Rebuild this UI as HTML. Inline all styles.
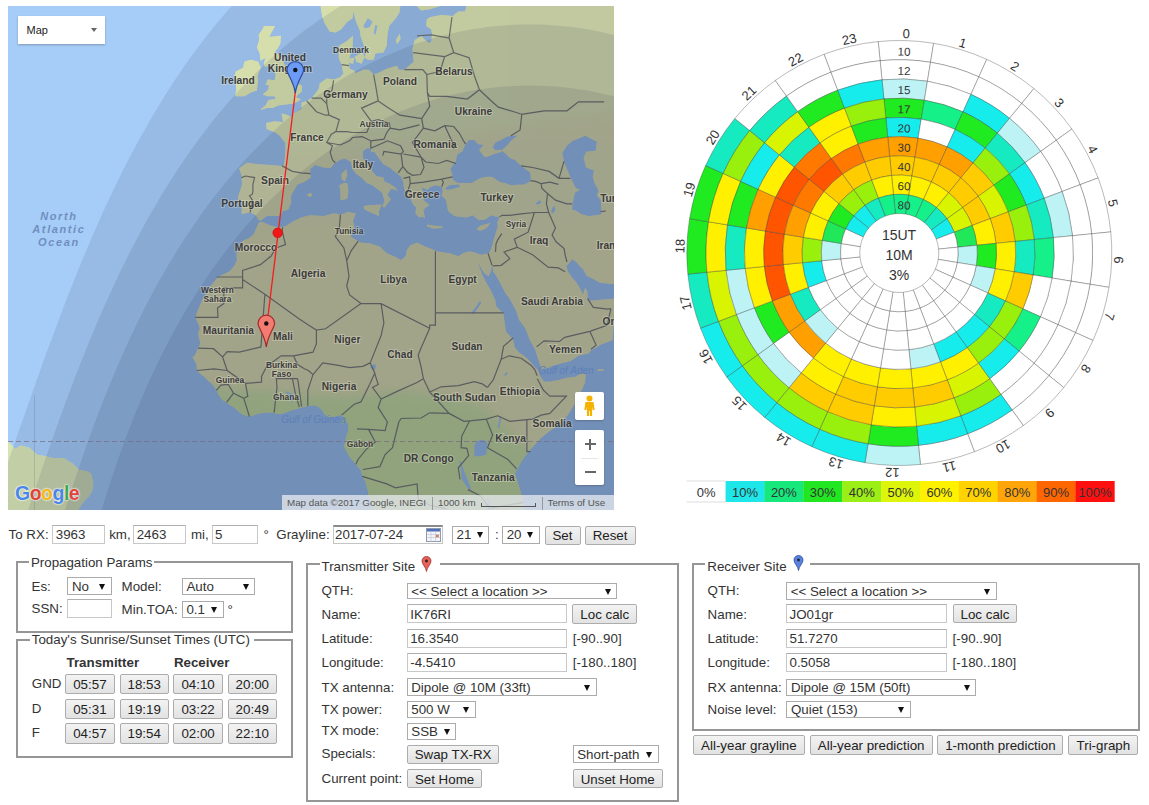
<!DOCTYPE html>
<html><head><meta charset="utf-8"><style>
html,body{margin:0;padding:0;background:#fff;}
body{width:1149px;height:805px;position:relative;overflow:hidden;font-family:"Liberation Sans",sans-serif;font-size:13.33px;color:#222;}
.a{position:absolute;white-space:nowrap;}

.t{position:absolute;white-space:nowrap;line-height:15px;font-size:13.33px;color:#333;}
.in{position:absolute;box-sizing:border-box;border:1px solid #C8C8C8;border-top-color:#AFAFAF;background:#fff;}
.sel{position:absolute;box-sizing:border-box;border:1px solid #ABABAB;background:#fff;}
.arr{position:absolute;width:0;height:0;border-left:3px solid transparent;border-right:3px solid transparent;border-top:6px solid #111;}
.btn{position:absolute;box-sizing:border-box;border:1px solid #ACACAC;border-radius:2px;background:linear-gradient(#F3F3F3,#E2E2E2);text-align:center;line-height:15px;font-size:13.33px;color:#222;white-space:nowrap;}
.fs{position:absolute;box-sizing:border-box;border:2px solid #969696;}
.lg{position:absolute;background:#fff;height:14px;}

</style></head><body>
<div class="a" style="left:8px;top:6px;width:606px;height:504px;overflow:hidden;">
<svg width="606" height="504" viewBox="8 6 606 504" style="display:block">
<defs><clipPath id="landclip"><path d="M466.9,-51.7L466.9,4.6L465.1,11.5L458.3,11.5L452.6,16.1L441.1,14.9L429.7,17.2L426.8,19.4L426.2,26.1L431.4,29.4L432.0,33.7L431.4,41.2L429.1,43.3L424.0,39.0L421.7,35.8L414.8,40.1L412.5,48.5L413.1,56.7L413.7,61.7L410.2,64.7L404.5,69.7L398.8,69.7L397.1,65.7L386.8,68.7L377.1,73.6L373.6,74.5L369.0,69.7L363.3,69.7L355.3,73.6L354.2,70.6L349.6,68.7L349.0,63.7L349.6,56.7L352.5,48.5L353.0,35.8L346.7,41.2L339.3,45.4L338.7,57.7L341.6,64.7L343.3,73.6L339.9,77.4L333.6,79.4L326.7,78.4L319.9,83.2L318.7,88.9L315.3,93.5L311.8,98.1L306.7,100.9L301.6,102.7L301.6,109.0L293.5,113.4L291.3,117.0L285.0,114.3L281.5,113.4L283.2,122.2L275.2,121.3L266.1,123.0L266.7,129.1L275.2,132.5L279.8,135.8L285.5,143.3L285.5,149.1L285.0,157.2L283.8,165.1L282.1,165.9L270.7,165.1L259.2,164.3L247.2,162.8L239.2,168.3L241.5,175.3L242.1,184.4L238.1,196.4L238.6,201.6L242.1,203.1L241.5,213.9L250.1,212.5L255.8,215.3L258.1,219.6L260.4,221.0L262.1,219.6L267.2,216.0L279.8,216.0L283.2,211.0L288.4,209.6L291.3,202.3L290.7,196.4L293.5,191.2L297.5,184.4L305.0,181.4L310.7,177.6L310.1,169.1L315.3,165.1L323.3,167.5L330.2,168.3L334.7,163.5L340.4,159.6L345.6,158.8L350.7,162.0L352.5,169.1L355.9,173.7L362.2,178.3L366.8,182.9L372.5,185.2L375.3,187.5L379.3,190.5L382.2,192.7L384.5,200.9L382.2,206.7L384.5,207.4L387.4,203.8L390.8,199.4L387.4,194.9L390.8,189.0L395.4,189.7L398.2,191.2L395.4,187.5L389.6,183.7L384.5,181.4L383.3,177.6L376.5,176.0L372.5,171.4L370.2,165.1L363.3,159.6L362.8,151.5L366.8,148.3L371.3,148.3L370.8,152.3L374.2,151.5L378.2,157.2L383.3,164.3L389.6,167.5L395.4,172.2L401.1,176.8L403.4,182.2L403.9,188.2L406.8,194.2L410.8,199.4L413.1,204.5L416.0,207.4L415.4,213.9L419.4,217.5L422.8,216.8L425.1,218.2L423.4,210.3L426.8,206.7L429.7,205.2L423.4,200.1L423.4,192.0L421.7,187.5L427.4,189.7L430.8,186.7L435.4,185.2L441.7,186.7L442.8,191.2L441.7,195.7L445.7,199.4L446.8,203.8L448.0,211.0L454.3,216.0L458.9,216.8L466.9,217.5L472.6,215.3L478.9,220.3L485.7,219.6L490.9,215.3L496.0,216.8L499.5,216.8L497.2,222.4L497.7,226.6L495.5,233.6L493.2,241.2L492.0,245.9L489.7,252.0L488.0,253.3L480.6,254.7L477.2,253.3L473.2,252.0L469.7,251.3L464.0,252.7L458.3,256.0L449.7,253.3L436.5,251.3L430.8,248.6L425.1,246.6L417.1,242.5L410.2,245.2L406.8,250.0L405.7,256.0L401.1,260.0L395.4,256.7L386.8,253.3L379.9,246.6L369.6,243.2L361.0,242.5L355.9,239.8L350.7,236.4L354.7,226.6L353.0,221.0L355.9,213.2L350.7,212.5L348.5,211.7L341.6,214.6L333.6,213.2L323.9,216.0L309.6,215.3L301.0,217.5L292.4,221.7L285.5,225.9L279.8,227.3L271.8,225.9L262.1,221.7L258.7,222.4L256.4,228.0L253.5,234.3L248.4,238.4L243.2,240.5L239.2,245.9L236.3,254.0L236.9,260.0L234.1,265.9L229.5,271.2L218.6,276.4L214.6,280.9L209.5,287.3L206.6,293.0L202.0,300.5L198.6,308.0L195.2,317.3L198.0,323.4L199.7,328.2L198.0,334.3L200.3,343.3L198.0,348.1L194.6,355.8L192.3,357.0L196.3,364.1L196.9,370.5L199.7,373.4L203.7,376.4L208.3,381.0L212.9,385.1L216.3,390.3L218.6,394.9L222.6,400.1L227.8,403.6L234.1,407.6L241.5,413.9L249.5,416.8L258.7,413.4L269.5,412.2L278.1,413.9L283.2,413.4L289.5,411.1L298.7,408.2L307.8,405.9L315.3,405.3L321.0,408.8L324.4,413.9L329.6,417.4L335.3,416.2L341.0,415.1L345.0,419.7L348.5,424.8L348.5,430.6L346.2,436.3L345.0,443.1L343.9,446.6L349.6,456.9L355.9,464.3L361.0,470.6L362.8,477.0L365.6,482.1L367.9,490.8L369.0,496.6L371.3,505.3L370.8,514.1L370.8,534.7L524.1,534.7L524.1,514.1L523.5,502.4L519.5,487.9L517.2,481.0L514.9,473.5L517.2,468.9L521.8,460.9L526.3,454.6L532.1,447.7L541.2,438.0L549.8,431.1L560.1,423.7L567.0,416.2L572.7,407.6L577.3,399.0L583.0,387.4L585.3,382.2L585.8,374.0L581.3,373.4L574.4,376.9L567.0,377.5L558.4,379.9L549.8,381.6L544.1,381.6L540.1,375.8L538.4,370.5L534.9,367.0L530.4,361.7L525.8,357.0L519.5,352.8L514.9,347.5L513.2,339.7L506.3,331.9L505.2,325.2L503.5,313.6L496.0,306.1L495.5,300.5L490.3,289.2L486.3,282.8L482.3,274.4L478.9,265.3L478.3,262.6L481.2,268.5L484.6,273.8L488.6,276.4L490.9,271.2L492.0,265.3L493.2,271.8L496.0,275.7L500.0,282.8L505.2,293.0L510.3,299.9L516.1,311.1L518.9,319.7L525.2,328.2L529.8,340.3L534.9,349.3L537.2,356.4L540.1,365.2L541.2,368.8L547.5,368.2L552.7,365.8L561.2,363.5L571.0,361.1L578.4,355.8L588.7,353.4L591.0,350.5L601.3,344.5L612.7,340.3L615.6,298.6L604.1,299.3L598.4,299.9L589.8,300.5L587.6,298.6L587.6,292.3L585.3,287.3L583.0,294.2L581.3,291.1L579.0,286.6L576.1,282.1L572.1,277.6L568.1,271.8L566.4,265.9L569.8,262.6L572.1,259.3L576.1,262.0L580.1,266.6L583.0,269.2L586.4,275.7L593.3,278.9L599.6,282.8L609.9,284.1L635.6,284.1L635.6,-51.7ZM315.3,-51.7L320.4,4.6L322.1,16.1L324.4,22.8L329.6,31.5L335.3,32.6L341.0,29.4L347.3,21.7L352.5,18.3L353.6,11.5L355.3,19.4L356.5,22.8L359.9,30.4L360.5,35.8L363.9,45.4L366.2,52.6L364.5,57.7L367.9,59.7L373.6,59.7L375.3,53.6L383.3,52.6L386.8,45.4L387.4,34.8L389.1,26.1L395.9,18.3L399.4,12.7L400.5,4.6L400.5,-51.7ZM414.2,-51.7L414.2,3.5L421.1,10.4L429.7,9.2L441.1,5.8L451.4,4.6L461.1,-1.2L461.1,-51.7ZM300.4,100.0L294.1,103.6L285.5,104.5L278.1,105.4L272.4,108.1L266.7,108.1L259.8,109.9L265.5,105.4L268.4,100.0L275.2,99.0L274.7,96.3L267.8,96.3L262.7,94.4L268.4,89.8L268.9,85.1L265.5,85.1L267.8,79.4L274.7,80.3L275.8,73.6L273.0,68.7L272.4,64.7L264.9,66.7L263.8,63.7L265.5,57.7L260.4,60.7L259.8,53.6L256.9,47.4L259.2,40.1L258.7,34.8L263.2,28.3L263.8,26.1L273.0,26.1L275.2,26.1L270.7,33.7L269.5,36.9L281.0,35.8L280.4,43.3L277.5,48.5L274.1,52.6L277.5,53.6L282.1,57.7L284.4,64.7L290.1,70.6L293.0,77.4L294.1,81.3L298.1,84.1L302.1,86.0L301.6,91.7L298.1,94.4L295.8,97.2L300.4,99.0ZM258.1,80.3L256.9,90.7L252.4,91.7L244.4,96.3L235.2,96.3L236.3,89.8L235.8,84.1L239.2,81.3L234.1,77.4L235.8,71.6L243.2,67.7L244.4,61.7L250.6,59.7L258.1,61.7L260.9,67.7L258.7,72.6L257.5,76.5ZM346.2,169.1L347.3,175.3L345.0,181.4L341.6,179.1L341.6,173.7ZM347.3,182.9L348.5,189.7L347.3,198.6L343.3,200.1L340.4,199.4L340.4,191.2L339.3,185.2L343.9,182.9ZM363.3,206.0L369.0,205.2L381.6,204.5L378.8,211.7L378.8,216.0L374.2,213.9L364.5,209.6ZM426.8,224.5L431.4,225.2L438.3,225.9L442.8,226.6L442.3,228.0L433.7,228.7L427.4,226.6ZM477.2,228.0L481.2,225.2L490.3,223.1L486.9,228.0L481.2,230.8L477.2,230.1ZM306.1,195.7L310.1,192.7L312.4,194.2L310.7,197.2L307.8,195.7ZM354.7,56.7L362.2,52.6L364.5,56.7L361.6,63.7L356.5,61.7ZM348.5,58.7L354.2,57.7L353.0,63.7L349.0,62.7ZM395.9,40.1L399.9,33.7L400.5,39.0L397.1,44.3ZM597.3,369.3L604.1,369.3L603.0,371.1L597.8,371.1ZM6.4,439.1L15.0,448.9L20.7,445.4L29.3,447.7L37.9,455.2L43.6,455.7L52.2,458.0L63.6,458.0L72.2,463.2L79.6,470.1L87.1,471.2L91.1,473.5L93.3,482.7L92.2,490.8L88.8,496.6L83.0,502.4L79.6,507.6L75.0,515.8L69.3,534.7L-22.2,534.7L-22.2,439.1ZM341.0,420.2L343.3,420.2L343.3,423.7L341.0,423.1Z"/></clipPath><filter id="blur6" x="-20%" y="-20%" width="140%" height="140%"><feGaussianBlur stdDeviation="6"/></filter></defs>
<rect x="0" y="0" width="1149" height="805" fill="#A6CDF7"/>
<path fill="#F2F0B0" d="M466.9,-51.7L466.9,4.6L465.1,11.5L458.3,11.5L452.6,16.1L441.1,14.9L429.7,17.2L426.8,19.4L426.2,26.1L431.4,29.4L432.0,33.7L431.4,41.2L429.1,43.3L424.0,39.0L421.7,35.8L414.8,40.1L412.5,48.5L413.1,56.7L413.7,61.7L410.2,64.7L404.5,69.7L398.8,69.7L397.1,65.7L386.8,68.7L377.1,73.6L373.6,74.5L369.0,69.7L363.3,69.7L355.3,73.6L354.2,70.6L349.6,68.7L349.0,63.7L349.6,56.7L352.5,48.5L353.0,35.8L346.7,41.2L339.3,45.4L338.7,57.7L341.6,64.7L343.3,73.6L339.9,77.4L333.6,79.4L326.7,78.4L319.9,83.2L318.7,88.9L315.3,93.5L311.8,98.1L306.7,100.9L301.6,102.7L301.6,109.0L293.5,113.4L291.3,117.0L285.0,114.3L281.5,113.4L283.2,122.2L275.2,121.3L266.1,123.0L266.7,129.1L275.2,132.5L279.8,135.8L285.5,143.3L285.5,149.1L285.0,157.2L283.8,165.1L282.1,165.9L270.7,165.1L259.2,164.3L247.2,162.8L239.2,168.3L241.5,175.3L242.1,184.4L238.1,196.4L238.6,201.6L242.1,203.1L241.5,213.9L250.1,212.5L255.8,215.3L258.1,219.6L260.4,221.0L262.1,219.6L267.2,216.0L279.8,216.0L283.2,211.0L288.4,209.6L291.3,202.3L290.7,196.4L293.5,191.2L297.5,184.4L305.0,181.4L310.7,177.6L310.1,169.1L315.3,165.1L323.3,167.5L330.2,168.3L334.7,163.5L340.4,159.6L345.6,158.8L350.7,162.0L352.5,169.1L355.9,173.7L362.2,178.3L366.8,182.9L372.5,185.2L375.3,187.5L379.3,190.5L382.2,192.7L384.5,200.9L382.2,206.7L384.5,207.4L387.4,203.8L390.8,199.4L387.4,194.9L390.8,189.0L395.4,189.7L398.2,191.2L395.4,187.5L389.6,183.7L384.5,181.4L383.3,177.6L376.5,176.0L372.5,171.4L370.2,165.1L363.3,159.6L362.8,151.5L366.8,148.3L371.3,148.3L370.8,152.3L374.2,151.5L378.2,157.2L383.3,164.3L389.6,167.5L395.4,172.2L401.1,176.8L403.4,182.2L403.9,188.2L406.8,194.2L410.8,199.4L413.1,204.5L416.0,207.4L415.4,213.9L419.4,217.5L422.8,216.8L425.1,218.2L423.4,210.3L426.8,206.7L429.7,205.2L423.4,200.1L423.4,192.0L421.7,187.5L427.4,189.7L430.8,186.7L435.4,185.2L441.7,186.7L442.8,191.2L441.7,195.7L445.7,199.4L446.8,203.8L448.0,211.0L454.3,216.0L458.9,216.8L466.9,217.5L472.6,215.3L478.9,220.3L485.7,219.6L490.9,215.3L496.0,216.8L499.5,216.8L497.2,222.4L497.7,226.6L495.5,233.6L493.2,241.2L492.0,245.9L489.7,252.0L488.0,253.3L480.6,254.7L477.2,253.3L473.2,252.0L469.7,251.3L464.0,252.7L458.3,256.0L449.7,253.3L436.5,251.3L430.8,248.6L425.1,246.6L417.1,242.5L410.2,245.2L406.8,250.0L405.7,256.0L401.1,260.0L395.4,256.7L386.8,253.3L379.9,246.6L369.6,243.2L361.0,242.5L355.9,239.8L350.7,236.4L354.7,226.6L353.0,221.0L355.9,213.2L350.7,212.5L348.5,211.7L341.6,214.6L333.6,213.2L323.9,216.0L309.6,215.3L301.0,217.5L292.4,221.7L285.5,225.9L279.8,227.3L271.8,225.9L262.1,221.7L258.7,222.4L256.4,228.0L253.5,234.3L248.4,238.4L243.2,240.5L239.2,245.9L236.3,254.0L236.9,260.0L234.1,265.9L229.5,271.2L218.6,276.4L214.6,280.9L209.5,287.3L206.6,293.0L202.0,300.5L198.6,308.0L195.2,317.3L198.0,323.4L199.7,328.2L198.0,334.3L200.3,343.3L198.0,348.1L194.6,355.8L192.3,357.0L196.3,364.1L196.9,370.5L199.7,373.4L203.7,376.4L208.3,381.0L212.9,385.1L216.3,390.3L218.6,394.9L222.6,400.1L227.8,403.6L234.1,407.6L241.5,413.9L249.5,416.8L258.7,413.4L269.5,412.2L278.1,413.9L283.2,413.4L289.5,411.1L298.7,408.2L307.8,405.9L315.3,405.3L321.0,408.8L324.4,413.9L329.6,417.4L335.3,416.2L341.0,415.1L345.0,419.7L348.5,424.8L348.5,430.6L346.2,436.3L345.0,443.1L343.9,446.6L349.6,456.9L355.9,464.3L361.0,470.6L362.8,477.0L365.6,482.1L367.9,490.8L369.0,496.6L371.3,505.3L370.8,514.1L370.8,534.7L524.1,534.7L524.1,514.1L523.5,502.4L519.5,487.9L517.2,481.0L514.9,473.5L517.2,468.9L521.8,460.9L526.3,454.6L532.1,447.7L541.2,438.0L549.8,431.1L560.1,423.7L567.0,416.2L572.7,407.6L577.3,399.0L583.0,387.4L585.3,382.2L585.8,374.0L581.3,373.4L574.4,376.9L567.0,377.5L558.4,379.9L549.8,381.6L544.1,381.6L540.1,375.8L538.4,370.5L534.9,367.0L530.4,361.7L525.8,357.0L519.5,352.8L514.9,347.5L513.2,339.7L506.3,331.9L505.2,325.2L503.5,313.6L496.0,306.1L495.5,300.5L490.3,289.2L486.3,282.8L482.3,274.4L478.9,265.3L478.3,262.6L481.2,268.5L484.6,273.8L488.6,276.4L490.9,271.2L492.0,265.3L493.2,271.8L496.0,275.7L500.0,282.8L505.2,293.0L510.3,299.9L516.1,311.1L518.9,319.7L525.2,328.2L529.8,340.3L534.9,349.3L537.2,356.4L540.1,365.2L541.2,368.8L547.5,368.2L552.7,365.8L561.2,363.5L571.0,361.1L578.4,355.8L588.7,353.4L591.0,350.5L601.3,344.5L612.7,340.3L615.6,298.6L604.1,299.3L598.4,299.9L589.8,300.5L587.6,298.6L587.6,292.3L585.3,287.3L583.0,294.2L581.3,291.1L579.0,286.6L576.1,282.1L572.1,277.6L568.1,271.8L566.4,265.9L569.8,262.6L572.1,259.3L576.1,262.0L580.1,266.6L583.0,269.2L586.4,275.7L593.3,278.9L599.6,282.8L609.9,284.1L635.6,284.1L635.6,-51.7ZM315.3,-51.7L320.4,4.6L322.1,16.1L324.4,22.8L329.6,31.5L335.3,32.6L341.0,29.4L347.3,21.7L352.5,18.3L353.6,11.5L355.3,19.4L356.5,22.8L359.9,30.4L360.5,35.8L363.9,45.4L366.2,52.6L364.5,57.7L367.9,59.7L373.6,59.7L375.3,53.6L383.3,52.6L386.8,45.4L387.4,34.8L389.1,26.1L395.9,18.3L399.4,12.7L400.5,4.6L400.5,-51.7ZM414.2,-51.7L414.2,3.5L421.1,10.4L429.7,9.2L441.1,5.8L451.4,4.6L461.1,-1.2L461.1,-51.7ZM300.4,100.0L294.1,103.6L285.5,104.5L278.1,105.4L272.4,108.1L266.7,108.1L259.8,109.9L265.5,105.4L268.4,100.0L275.2,99.0L274.7,96.3L267.8,96.3L262.7,94.4L268.4,89.8L268.9,85.1L265.5,85.1L267.8,79.4L274.7,80.3L275.8,73.6L273.0,68.7L272.4,64.7L264.9,66.7L263.8,63.7L265.5,57.7L260.4,60.7L259.8,53.6L256.9,47.4L259.2,40.1L258.7,34.8L263.2,28.3L263.8,26.1L273.0,26.1L275.2,26.1L270.7,33.7L269.5,36.9L281.0,35.8L280.4,43.3L277.5,48.5L274.1,52.6L277.5,53.6L282.1,57.7L284.4,64.7L290.1,70.6L293.0,77.4L294.1,81.3L298.1,84.1L302.1,86.0L301.6,91.7L298.1,94.4L295.8,97.2L300.4,99.0ZM258.1,80.3L256.9,90.7L252.4,91.7L244.4,96.3L235.2,96.3L236.3,89.8L235.8,84.1L239.2,81.3L234.1,77.4L235.8,71.6L243.2,67.7L244.4,61.7L250.6,59.7L258.1,61.7L260.9,67.7L258.7,72.6L257.5,76.5ZM346.2,169.1L347.3,175.3L345.0,181.4L341.6,179.1L341.6,173.7ZM347.3,182.9L348.5,189.7L347.3,198.6L343.3,200.1L340.4,199.4L340.4,191.2L339.3,185.2L343.9,182.9ZM363.3,206.0L369.0,205.2L381.6,204.5L378.8,211.7L378.8,216.0L374.2,213.9L364.5,209.6ZM426.8,224.5L431.4,225.2L438.3,225.9L442.8,226.6L442.3,228.0L433.7,228.7L427.4,226.6ZM477.2,228.0L481.2,225.2L490.3,223.1L486.9,228.0L481.2,230.8L477.2,230.1ZM306.1,195.7L310.1,192.7L312.4,194.2L310.7,197.2L307.8,195.7ZM354.7,56.7L362.2,52.6L364.5,56.7L361.6,63.7L356.5,61.7ZM348.5,58.7L354.2,57.7L353.0,63.7L349.0,62.7ZM395.9,40.1L399.9,33.7L400.5,39.0L397.1,44.3ZM597.3,369.3L604.1,369.3L603.0,371.1L597.8,371.1ZM6.4,439.1L15.0,448.9L20.7,445.4L29.3,447.7L37.9,455.2L43.6,455.7L52.2,458.0L63.6,458.0L72.2,463.2L79.6,470.1L87.1,471.2L91.1,473.5L93.3,482.7L92.2,490.8L88.8,496.6L83.0,502.4L79.6,507.6L75.0,515.8L69.3,534.7L-22.2,534.7L-22.2,439.1ZM341.0,420.2L343.3,420.2L343.3,423.7L341.0,423.1Z"/>
<g clip-path="url(#landclip)">
<path fill="#D2EC9E" opacity="0.9" filter="url(#blur6)" d="M189.4,384.5L338.2,396.1L406.8,390.3L475.4,401.9L498.3,419.1L521.2,442.0L544.1,459.2L589.8,470.6L589.8,534.7L189.4,534.7Z"/>
<path fill="#ECF4B8" opacity="0.9" filter="url(#blur6)" d="M223.8,161.2L349.6,153.1L464.0,136.7L635.6,110.8L635.6,-51.7L223.8,-51.7Z"/>
<path fill="#E8F0B6" opacity="0.6" filter="url(#blur6)" d="M223.8,224.5L349.6,217.5L452.6,224.5L549.8,217.5L635.6,206.7L635.6,145.0L223.8,145.0Z"/>
<path fill="#D3E2B2" opacity="0.9" d="M-50.8,430.6L120.8,430.6L120.8,534.7L-50.8,534.7Z"/>
</g>
<path fill="#A6CDF7" d="M458.3,182.9L453.1,179.9L452.0,172.9L450.3,169.1L452.6,165.9L456.0,161.2L457.1,154.8L462.3,151.5L465.7,144.2L469.1,140.0L473.7,140.0L478.3,144.2L483.4,145.0L478.9,149.9L484.6,157.2L488.6,156.4L494.3,154.0L500.6,152.3L502.3,150.7L505.8,154.0L509.8,158.0L515.5,160.4L520.1,165.1L524.1,168.3L529.8,172.2L530.9,178.3L529.8,181.4L524.1,184.4L518.3,184.4L511.5,185.2L505.2,182.9L500.6,182.2L495.5,179.1L492.0,176.8L486.9,176.8L481.7,177.6L476.6,179.9L471.4,182.9L465.1,182.9ZM492.6,147.4L495.5,149.9L501.8,149.9L507.5,145.0L510.9,140.8L517.2,135.8L512.6,135.8L506.9,136.7L501.2,140.0L495.5,142.5ZM445.1,188.2L449.7,185.2L458.3,184.4L460.0,186.7L452.6,189.0L446.8,189.7ZM572.7,140.8L567.0,145.8L562.4,153.1L564.7,163.5L570.4,176.8L575.5,187.5L580.1,189.7L575.0,192.7L572.7,203.1L572.1,209.6L575.5,210.3L581.3,213.9L588.7,216.0L600.7,214.6L601.3,210.3L600.7,200.1L596.7,195.7L598.4,190.5L594.4,182.9L592.7,176.8L593.8,170.6L585.8,167.5L583.5,157.2L586.4,151.5L595.6,150.7L596.7,141.7L589.8,138.3L585.3,135.8L575.5,140.0ZM474.3,448.9L474.3,456.3L480.6,456.3L486.3,454.6L486.9,447.7L487.5,443.7L486.3,440.9L481.2,439.7L476.6,441.4L474.3,445.4ZM459.4,460.9L461.1,470.6L461.7,479.3L466.9,486.8L469.7,490.8L470.9,487.9L467.4,479.3L463.4,469.5L460.6,460.9ZM486.9,496.6L490.3,502.4L490.9,514.1L488.6,514.1L488.0,504.1ZM363.3,26.1L367.9,18.3L372.5,21.7L369.6,27.2L365.0,28.3ZM373.6,33.7L375.3,25.0L377.6,26.1L375.3,34.8ZM290.7,405.3L293.5,394.4L285.0,390.9L291.3,399.6ZM370.2,367.0L375.3,363.5L375.9,368.2L372.5,369.9ZM497.7,427.7L500.0,415.7L501.2,417.4L499.5,427.7ZM550.9,211.7L553.8,205.2L555.5,209.6L553.2,213.2ZM535.5,203.8L540.1,200.1L541.2,203.1L537.2,204.5ZM471.4,312.9L480.0,301.1L481.2,303.0L473.7,314.2ZM504.0,375.2L506.3,371.7L507.5,373.4L505.8,375.8Z"/>
<path fill="none" stroke="#74746A" stroke-width="1.2" opacity="0.9" d="M241.5,177.6L245.5,176.0L254.6,177.6L252.9,184.4L252.9,190.5L252.4,194.2L249.5,195.7L252.4,200.1L250.1,212.5M282.1,165.9L292.4,171.4L301.0,172.9L310.7,173.7M306.7,100.9L316.4,111.7L325.6,115.2L329.0,115.2L339.3,119.6L335.9,131.6L331.3,134.2L326.7,142.5L332.4,145.8L330.2,152.3L332.4,159.6L335.3,162.8M311.8,98.1L321.0,98.1L326.7,103.6M333.6,80.3L331.9,90.7L326.7,94.4L326.7,103.6L329.0,115.2M341.6,64.7L349.0,65.7M373.6,74.5L375.9,87.0L378.2,100.9L361.6,108.1L371.3,121.3L366.8,132.5L352.5,132.5L346.7,131.6L335.9,131.6M326.7,142.5L340.4,145.0L349.6,140.8L352.5,137.5L362.2,136.7L370.8,140.8L370.8,148.3M371.3,121.3L378.2,119.6L389.1,123.0L390.2,128.2L386.8,132.5L383.9,139.2L370.8,140.8M378.2,100.9L387.4,107.2L399.9,115.2L421.7,118.7L429.7,106.3L427.4,92.6L426.8,74.5L422.8,69.7L404.5,69.7M413.1,52.6L444.6,56.7M417.1,35.8L431.4,34.8L449.1,38.0L452.0,17.2M426.8,74.5L440.0,71.6L444.6,56.7L453.7,52.6L469.1,57.7L474.3,75.5L479.4,89.8L467.4,99.0L446.8,96.3L429.7,96.3L427.4,92.6M449.1,38.0L453.7,52.6M479.4,89.8L489.2,99.0L498.3,107.2L510.9,110.8L521.8,114.3L520.1,129.9L510.9,135.8M421.7,118.7L423.4,128.2L434.8,130.8L444.6,125.6L453.7,126.5L459.4,133.3L463.4,140.8L465.7,144.2M444.6,125.6L453.7,145.0L453.7,149.1M423.4,128.2L412.5,142.5L421.1,157.2L425.7,162.0L438.3,163.5L446.8,160.4L456.0,163.5M390.2,128.2L399.9,129.9L419.4,124.8M370.8,148.3L382.2,143.3L387.4,140.8L400.5,145.8L403.4,151.5L401.1,154.0L383.9,151.5L382.8,155.6M401.1,154.0L402.8,166.7L398.2,172.9M403.4,154.0L421.1,157.2M402.8,166.7L407.4,172.2L412.5,175.3L420.5,174.5L424.0,167.5L421.1,157.2M403.4,178.3L409.7,176.8L410.2,183.7L406.8,194.2M410.2,183.7L423.4,182.2L441.7,179.1L443.4,182.2L441.7,186.7M441.7,179.1L452.6,176.8M499.5,216.8L502.3,215.3L509.8,215.3L521.2,213.9L534.4,212.5L548.7,212.5L546.4,203.8L547.5,193.5L541.8,188.2L541.2,183.7L535.5,181.4L530.4,180.6M501.8,233.6L497.7,239.8L496.0,243.9L495.5,252.0M534.4,212.5L528.1,232.2L514.3,239.1L517.2,247.3L504.0,252.0L509.8,258.7L501.2,265.3L492.6,265.9M517.2,247.3L532.6,254.7L548.1,267.2L558.4,267.9L565.2,271.8M548.7,212.5L552.7,221.7L555.5,228.0L552.1,235.0L556.1,241.8L564.1,248.6L565.2,255.3L567.0,262.0M488.0,253.3L492.0,265.3M536.6,346.9L544.1,340.9L559.5,341.5L564.7,337.3L589.8,331.3L607.0,325.2L611.0,308.6M591.0,349.3L596.1,345.1L589.8,331.3M587.6,298.6L593.3,307.4L607.6,309.2L611.0,308.6M521.2,165.9L532.6,167.5L549.2,171.4L559.0,178.3L570.4,178.3M541.2,183.7L549.8,182.2L558.4,184.4M547.5,193.5L555.5,200.1L567.0,203.8L572.1,203.8M600.7,211.7L605.9,211.0M282.7,227.3L282.1,230.8L285.5,244.6L275.8,248.0L271.2,256.0L260.4,264.6L242.6,270.5L242.6,277.0M242.6,277.0L216.9,277.0M242.6,277.0L242.6,287.9L223.8,287.9L223.8,303.6L217.5,308.0L218.0,317.3L195.2,317.3M242.6,279.6L264.9,294.2L260.9,346.9L239.2,352.2L227.2,351.6L222.6,357.0L213.5,348.7L198.0,348.1M264.9,294.2L299.3,319.1L310.7,326.4L316.4,330.1L325.6,328.8L361.0,303.6L349.6,294.9L346.7,286.0L349.0,276.4L346.7,260.7L351.3,250.6L358.2,241.2M340.4,214.6L339.3,228.7L335.3,236.4L343.9,248.0L346.7,260.7M435.4,251.3L435.4,325.2L429.7,325.2L429.7,328.2L381.1,303.6L361.0,303.6M435.4,312.9L503.5,312.9M316.4,330.1L316.4,343.9L313.0,352.2L293.5,355.8L281.0,355.8L266.7,366.4L261.5,376.4L261.5,382.2L245.5,383.3L227.2,370.5L222.6,357.0M381.1,303.6L383.9,322.8L381.1,335.5L370.2,362.9M370.2,362.9L362.8,366.4L349.6,367.6L337.0,365.2L322.7,362.9L313.0,374.6L308.4,370.5L304.4,368.8L297.5,364.6L293.5,355.8M313.0,374.6L307.8,390.3L307.8,405.9M370.2,362.9L374.8,372.9L369.6,384.5L361.0,401.9L354.2,404.2L341.6,415.1M373.6,369.9L378.2,384.5L372.5,387.4L381.1,399.0L398.2,390.9L416.5,382.8L423.4,378.7L421.1,367.0L418.2,355.2L420.5,349.3L429.7,328.2M423.4,378.7L429.7,392.0L441.1,386.8L458.3,385.7L474.3,381.6L482.3,383.9L487.5,387.4M429.7,392.0L449.1,413.4L464.0,421.4L469.7,420.8L486.3,419.1L497.7,415.7M487.5,387.4L493.2,379.9L501.2,359.3L503.5,346.3L513.2,337.9M501.2,359.3L509.2,355.8L521.2,358.2L530.9,365.2L534.9,369.9L537.2,375.8M537.2,378.7L543.5,390.3L549.8,396.1L566.4,396.1L549.8,413.4L541.2,415.1L532.6,419.1L526.9,419.7L509.8,421.4L497.7,415.7M526.9,419.7L526.9,451.7L530.4,451.7M486.3,419.1L492.6,435.1L487.5,447.7L507.5,459.2L516.6,468.9M469.7,420.8L461.7,436.3L461.1,447.7L466.9,448.3L468.6,455.7L458.3,467.8L460.0,479.3M398.8,422.0L401.1,418.5L421.1,418.0L429.7,412.8L449.1,413.4M398.8,422.0L392.5,447.7L385.1,454.6L379.9,466.6L362.8,469.5M357.0,428.8L368.5,429.4L385.1,430.6L387.4,422.0L378.2,407.6L381.1,399.0M368.5,429.4L375.3,442.0L366.2,449.4L358.2,459.2L355.9,464.3M362.2,476.4L386.8,483.9L395.4,487.9L417.1,483.9L418.2,498.9L429.7,505.3L446.8,508.8M468.0,489.6L480.6,496.0L489.7,508.2M490.9,508.2L523.5,502.4M274.1,412.8L277.0,387.4L276.4,378.7L295.3,378.7L297.5,378.7M299.3,407.0L295.3,393.2L292.4,378.7M301.6,406.5L298.1,381.6L297.5,378.7M216.3,390.3L220.9,385.1L228.3,384.5L233.5,393.2L226.6,402.4M243.8,398.4L249.5,416.8M245.5,383.3L247.8,396.1L243.8,398.4L233.5,393.2M196.9,370.5L214.0,368.8L227.2,370.5M521.2,114.3L544.1,110.8L567.0,110.8L578.4,101.8L604.1,101.8M559.0,178.3L564.1,161.2"/>
<path fill="#0F1946" fill-opacity="0.1" d="M-50.8,620.2L-45.1,606.1L-39.4,591.6L-33.6,576.9L-27.9,561.8L-22.2,546.5L-16.5,530.9L-10.8,515.0L-5.0,499.0L0.7,482.8L6.4,466.5L12.1,450.2L17.8,433.8L23.6,417.5L29.3,401.2L35.0,385.0L40.7,369.0L46.4,353.1L52.2,337.5L57.9,322.2L63.6,307.1L69.3,292.4L75.0,277.9L80.8,263.8L86.5,250.0L92.2,236.6L97.9,223.6L103.6,210.8L109.4,198.5L115.1,186.5L120.8,174.8L126.5,163.5L132.2,152.5L138.0,141.8L143.7,131.5L149.4,121.4L155.1,111.7L160.8,102.2L166.6,93.0L172.3,84.1L178.0,75.5L183.7,67.1L189.4,59.0L195.2,51.1L200.9,43.5L206.6,36.1L212.3,28.9L218.0,21.9L223.8,15.1L229.5,8.6L235.2,2.2L240.9,-4.0L246.6,-10.0L252.4,-15.8L258.1,-21.4L263.8,-26.9L269.5,-32.2L275.2,-37.3L281.0,-42.3L286.7,-47.1L292.4,-51.7L298.1,-56.2L303.8,-60.6L309.6,-64.8L315.3,-68.9L321.0,-72.9L326.7,-76.7L332.4,-80.4L338.2,-83.9L343.9,-87.4L349.6,-90.7L355.3,-93.9L361.0,-96.9L366.8,-99.9L372.5,-102.7L378.2,-105.4L383.9,-108.0L389.6,-110.5L395.4,-112.9L401.1,-115.1L406.8,-117.3L412.5,-119.4L418.2,-121.3L424.0,-123.2L429.7,-124.9L435.4,-126.5L441.1,-128.1L446.8,-129.5L452.6,-130.9L458.3,-132.1L464.0,-133.3L469.7,-134.3L475.4,-135.3L481.2,-136.1L486.9,-136.9L492.6,-137.5L498.3,-138.1L504.0,-138.6L509.8,-138.9L515.5,-139.2L521.2,-139.4L526.9,-139.5L532.6,-139.5L538.4,-139.4L544.1,-139.2L549.8,-138.9L555.5,-138.6L561.2,-138.1L567.0,-137.5L572.7,-136.9L578.4,-136.1L584.1,-135.3L589.8,-134.3L595.6,-133.3L601.3,-132.1L607.0,-130.9L612.7,-129.5L618.4,-128.1L624.2,-126.5L629.9,-124.9L635.6,-123.2L641.3,-121.3L647.0,-119.4L652.8,-117.3L658.5,-115.1L664.2,-112.9L669.9,-110.5L675.6,-108.0L681.4,-105.4L687.1,-102.7L692.8,-99.9L692.8,1240.4L-50.8,1240.4Z"/>
<path fill="#0F1946" fill-opacity="0.1" d="M-50.8,736.6L-45.1,721.9L-39.4,706.8L-33.6,691.4L-27.9,675.6L-22.2,659.6L-16.5,643.2L-10.8,626.5L-5.0,609.7L0.7,592.7L6.4,575.5L12.1,558.2L17.8,541.0L23.6,523.7L29.3,506.6L35.0,489.5L40.7,472.7L46.4,456.0L52.2,439.7L57.9,423.6L63.6,407.8L69.3,392.4L75.0,377.3L80.8,362.6L86.5,348.3L92.2,334.4L97.9,320.9L103.6,307.7L109.4,295.0L115.1,282.6L120.8,270.6L126.5,258.9L132.2,247.7L138.0,236.7L143.7,226.1L149.4,215.8L155.1,205.9L160.8,196.2L166.6,186.8L172.3,177.8L178.0,169.0L183.7,160.5L189.4,152.2L195.2,144.2L200.9,136.4L206.6,128.9L212.3,121.6L218.0,114.5L223.8,107.7L229.5,101.0L235.2,94.6L240.9,88.3L246.6,82.3L252.4,76.4L258.1,70.7L263.8,65.2L269.5,59.8L275.2,54.7L281.0,49.6L286.7,44.8L292.4,40.1L298.1,35.5L303.8,31.1L309.6,26.9L315.3,22.7L321.0,18.8L326.7,14.9L332.4,11.2L338.2,7.6L343.9,4.2L349.6,0.8L355.3,-2.4L361.0,-5.5L366.8,-8.4L372.5,-11.3L378.2,-14.0L383.9,-16.6L389.6,-19.1L395.4,-21.5L401.1,-23.8L406.8,-26.0L412.5,-28.1L418.2,-30.0L424.0,-31.9L429.7,-33.6L435.4,-35.3L441.1,-36.8L446.8,-38.3L452.6,-39.6L458.3,-40.9L464.0,-42.0L469.7,-43.1L475.4,-44.1L481.2,-44.9L486.9,-45.7L492.6,-46.3L498.3,-46.9L504.0,-47.4L509.8,-47.8L515.5,-48.0L521.2,-48.2L526.9,-48.3L532.6,-48.3L538.4,-48.2L544.1,-48.0L549.8,-47.8L555.5,-47.4L561.2,-46.9L567.0,-46.3L572.7,-45.7L578.4,-44.9L584.1,-44.1L589.8,-43.1L595.6,-42.0L601.3,-40.9L607.0,-39.6L612.7,-38.3L618.4,-36.8L624.2,-35.3L629.9,-33.6L635.6,-31.9L641.3,-30.0L647.0,-28.1L652.8,-26.0L658.5,-23.8L664.2,-21.5L669.9,-19.1L675.6,-16.6L681.4,-14.0L687.1,-11.3L692.8,-8.4L692.8,1240.4L-50.8,1240.4Z"/>
<path fill="#0F1946" fill-opacity="0.1" d="M-50.8,908.7L-45.1,891.8L-39.4,874.3L-33.6,856.2L-27.9,837.6L-22.2,818.5L-16.5,798.9L-10.8,778.9L-5.0,758.5L0.7,737.8L6.4,716.9L12.1,695.9L17.8,674.8L23.6,653.7L29.3,632.8L35.0,612.1L40.7,591.7L46.4,571.7L52.2,552.1L57.9,533.0L63.6,514.4L69.3,496.4L75.0,478.9L80.8,461.9L86.5,445.6L92.2,429.7L97.9,414.5L103.6,399.7L109.4,385.5L115.1,371.8L120.8,358.5L126.5,345.8L132.2,333.5L138.0,321.6L143.7,310.1L149.4,299.0L155.1,288.3L160.8,278.0L166.6,268.0L172.3,258.4L178.0,249.1L183.7,240.1L189.4,231.4L195.2,222.9L200.9,214.8L206.6,206.9L212.3,199.3L218.0,191.9L223.8,184.7L229.5,177.8L235.2,171.1L240.9,164.6L246.6,158.3L252.4,152.2L258.1,146.4L263.8,140.7L269.5,135.1L275.2,129.8L281.0,124.6L286.7,119.6L292.4,114.8L298.1,110.1L303.8,105.6L309.6,101.2L315.3,97.0L321.0,92.9L326.7,89.0L332.4,85.2L338.2,81.5L343.9,78.0L349.6,74.6L355.3,71.3L361.0,68.1L366.8,65.1L372.5,62.2L378.2,59.4L383.9,56.7L389.6,54.2L395.4,51.7L401.1,49.4L406.8,47.2L412.5,45.1L418.2,43.1L424.0,41.2L429.7,39.4L435.4,37.7L441.1,36.1L446.8,34.7L452.6,33.3L458.3,32.0L464.0,30.8L469.7,29.8L475.4,28.8L481.2,27.9L486.9,27.1L492.6,26.5L498.3,25.9L504.0,25.4L509.8,25.0L515.5,24.7L521.2,24.5L526.9,24.4L532.6,24.4L538.4,24.5L544.1,24.7L549.8,25.0L555.5,25.4L561.2,25.9L567.0,26.5L572.7,27.1L578.4,27.9L584.1,28.8L589.8,29.8L595.6,30.8L601.3,32.0L607.0,33.3L612.7,34.7L618.4,36.1L624.2,37.7L629.9,39.4L635.6,41.2L641.3,43.1L647.0,45.1L652.8,47.2L658.5,49.4L664.2,51.7L669.9,54.2L675.6,56.7L681.4,59.4L687.1,62.2L692.8,65.1L692.8,1240.4L-50.8,1240.4Z"/>
<path fill="#0F1946" fill-opacity="0.1" d="M-50.8,1240.4L-45.1,1240.4L-39.4,1240.4L-33.6,1240.4L-27.9,1240.4L-22.2,1240.4L-16.5,1240.4L-10.8,1203.0L-5.0,1162.3L0.7,1119.2L6.4,1074.1L12.1,1027.6L17.8,980.7L23.6,934.2L29.3,889.1L35.0,846.0L40.7,805.3L46.4,767.3L52.2,731.8L57.9,698.8L63.6,668.2L69.3,639.7L75.0,613.1L80.8,588.3L86.5,565.1L92.2,543.3L97.9,522.8L103.6,503.4L109.4,485.2L115.1,467.9L120.8,451.5L126.5,436.0L132.2,421.2L138.0,407.0L143.7,393.6L149.4,380.7L155.1,368.4L160.8,356.6L166.6,345.3L172.3,334.5L178.0,324.1L183.7,314.0L189.4,304.4L195.2,295.1L200.9,286.2L206.6,277.6L212.3,269.3L218.0,261.4L223.8,253.6L229.5,246.2L235.2,239.0L240.9,232.1L246.6,225.4L252.4,218.9L258.1,212.7L263.8,206.6L269.5,200.8L275.2,195.2L281.0,189.7L286.7,184.4L292.4,179.4L298.1,174.5L303.8,169.7L309.6,165.1L315.3,160.7L321.0,156.5L326.7,152.3L332.4,148.4L338.2,144.6L343.9,140.9L349.6,137.4L355.3,134.0L361.0,130.7L366.8,127.5L372.5,124.5L378.2,121.6L383.9,118.9L389.6,116.2L395.4,113.7L401.1,111.3L406.8,109.0L412.5,106.8L418.2,104.8L424.0,102.8L429.7,101.0L435.4,99.2L441.1,97.6L446.8,96.1L452.6,94.7L458.3,93.4L464.0,92.2L469.7,91.1L475.4,90.0L481.2,89.2L486.9,88.4L492.6,87.7L498.3,87.1L504.0,86.6L509.8,86.2L515.5,85.9L521.2,85.7L526.9,85.6L532.6,85.6L538.4,85.7L544.1,85.9L549.8,86.2L555.5,86.6L561.2,87.1L567.0,87.7L572.7,88.4L578.4,89.2L584.1,90.0L589.8,91.1L595.6,92.2L601.3,93.4L607.0,94.7L612.7,96.1L618.4,97.6L624.2,99.2L629.9,101.0L635.6,102.8L641.3,104.8L647.0,106.8L652.8,109.0L658.5,111.3L664.2,113.7L669.9,116.2L675.6,118.9L681.4,121.6L687.1,124.5L692.8,127.5L692.8,1240.4L-50.8,1240.4Z"/>
<g font-family="Liberation Sans, sans-serif" font-weight="bold" fill="#3C3C3C" text-anchor="middle" stroke="#F4F2E0" stroke-opacity="0.3" stroke-width="2" paint-order="stroke" >
<text x="290" y="60.6" font-size="10.23">United</text>
<text x="290" y="71.5" font-size="10.23">Kingdom</text>
<text x="238" y="84.0" font-size="10.23">Ireland</text>
<text x="351" y="53.2" font-size="8.37">Denmark</text>
<text x="400" y="85.0" font-size="10.23">Poland</text>
<text x="454" y="75.0" font-size="10.23">Belarus</text>
<text x="345.5" y="97.7" font-size="10.23">Germany</text>
<text x="473.5" y="115.0" font-size="10.23">Ukraine</text>
<text x="374" y="127.2" font-size="8.37">Austria</text>
<text x="307" y="140.6" font-size="10.23">France</text>
<text x="435" y="148.0" font-size="10.23">Romania</text>
<text x="363" y="168.0" font-size="10.23">Italy</text>
<text x="275" y="184.0" font-size="10.23">Spain</text>
<text x="422" y="198.0" font-size="10.23">Greece</text>
<text x="497" y="201.0" font-size="10.23">Turkey</text>
<text x="242" y="206.5" font-size="10.23">Portugal</text>
<text x="349" y="234.2" font-size="8.37">Tunisia</text>
<text x="516" y="226.8" font-size="8.37">Syria</text>
<text x="539" y="243.6" font-size="10.23">Iraq</text>
<text x="606" y="249.0" font-size="10.23">Iran</text>
<text x="608" y="202.0" font-size="10.23">Tur</text>
<text x="256" y="251.0" font-size="10.23">Morocco</text>
<text x="308" y="277.0" font-size="10.23">Algeria</text>
<text x="393.5" y="282.6" font-size="10.23">Libya</text>
<text x="462.6" y="282.6" font-size="10.23">Egypt</text>
<text x="552" y="305.0" font-size="10.23">Saudi Arabia</text>
<text x="217.5" y="293.2" font-size="8.37">Western</text>
<text x="217.5" y="301.7" font-size="8.37">Sahara</text>
<text x="228.4" y="333.8" font-size="10.23">Mauritania</text>
<text x="283" y="340.0" font-size="10.23">Mali</text>
<text x="347.4" y="343.4" font-size="10.23">Niger</text>
<text x="400" y="358.0" font-size="10.23">Chad</text>
<text x="467" y="349.8" font-size="10.23">Sudan</text>
<text x="565.6" y="353.0" font-size="10.23">Yemen</text>
<text x="611" y="325.0" font-size="10.23">Om</text>
<text x="281.5" y="368.2" font-size="8.37">Burkina</text>
<text x="281.5" y="376.5" font-size="8.37">Faso</text>
<text x="230" y="383.2" font-size="8.37">Guinea</text>
<text x="339" y="390.0" font-size="10.23">Nigeria</text>
<text x="286" y="400.2" font-size="8.37">Ghana</text>
<text x="464.5" y="401.0" font-size="10.23">South Sudan</text>
<text x="520" y="394.6" font-size="10.23">Ethiopia</text>
<text x="552" y="427.0" font-size="10.23">Somalia</text>
<text x="360" y="446.9" font-size="8.37">Gabon</text>
<text x="510.6" y="442.0" font-size="10.23">Kenya</text>
<text x="428.7" y="461.8" font-size="10.23">DR Congo</text>
<text x="493.3" y="481.0" font-size="10.23">Tanzania</text>
</g>
<g font-family="Liberation Sans, sans-serif" font-style="italic" fill="#5D80B8" text-anchor="middle">
<text x="566" y="373.6" font-size="10">Gulf of Aden</text>
<text x="313.5" y="422.6" font-size="10">Gulf of Guinea</text>
<text x="58.9" y="219.6" font-size="11" font-weight="bold" letter-spacing="1.6" fill="#6F8FC0">North</text>
<text x="58.9" y="233.0" font-size="11" font-weight="bold" letter-spacing="1.6" fill="#6F8FC0">Atlantic</text>
<text x="58.9" y="245.9" font-size="11" font-weight="bold" letter-spacing="1.6" fill="#6F8FC0">Ocean</text>
</g>
<line x1="8" y1="441.5" x2="614" y2="441.5" stroke="#7A6A80" stroke-width="1" stroke-dasharray="5,3" opacity="0.7"/>
<line x1="34.5" y1="395" x2="34.5" y2="510" stroke="#556" stroke-width="0.6" opacity="0.35"/>
<line x1="295.3" y1="92" x2="266.3" y2="330" stroke="#F21D1D" stroke-width="1.3"/>
<circle cx="277.7" cy="232.8" r="4.8" fill="#F01818" stroke="#C00" stroke-width="0.6"/>
<path d="M295.3,93 C293.8,81.3 287.0,74 287.0,70 A8.3,8.3 0 1 1 303.6,70 C303.6,74 296.8,81.3 295.3,93Z" fill="#6B9BF5" stroke="#2C4A9E" stroke-width="1.2"/><circle cx="295.3" cy="70" r="2.2" fill="#111"/>
<path d="M266.3,347 C264.8,334.8 258.0,327.5 258.0,323.5 A8.3,8.3 0 1 1 274.6,323.5 C274.6,327.5 267.8,334.8 266.3,347Z" fill="#F27B72" stroke="#A8282A" stroke-width="1.2"/><circle cx="266.3" cy="323.5" r="2.2" fill="#111"/>
</svg>
</div>

<div style="position:absolute;left:18px;top:15.5px;width:86.5px;height:28.5px;background:#fff;box-shadow:0 1px 2px rgba(0,0,0,0.25);"></div>
<div style="position:absolute;left:26.5px;top:23.5px;font-size:11px;color:#222;">Map</div>
<div style="position:absolute;left:91px;top:27.5px;width:0;height:0;border-left:3.5px solid transparent;border-right:3.5px solid transparent;border-top:4px solid #666;"></div>
<div style="position:absolute;left:575px;top:392px;width:29px;height:28px;background:#fff;border-radius:2px;box-shadow:0 1px 2px rgba(0,0,0,0.2);"></div>
<svg style="position:absolute;left:575px;top:392px" width="29" height="28"><g fill="#F5B301"><circle cx="14.5" cy="6.5" r="3"/><path d="M10.5,10 h8 l1.2,8 h-2 l-0.6,-3 v9 h-2.2 v-5 h-0.8 v5 h-2.2 v-9 l-0.6,3 h-2Z"/></g></svg>
<div style="position:absolute;left:575px;top:430px;width:29px;height:55px;background:#fff;border-radius:2px;box-shadow:0 1px 2px rgba(0,0,0,0.2);"></div>
<div style="position:absolute;left:581px;top:457.5px;width:17px;height:1px;background:#e6e6e6;"></div>
<div style="position:absolute;left:584.5px;top:443px;width:11px;height:2.4px;background:#666;"></div>
<div style="position:absolute;left:588.8px;top:438.7px;width:2.4px;height:11px;background:#666;"></div>
<div style="position:absolute;left:584.5px;top:470.8px;width:11px;height:2.4px;background:#666;"></div>
<div style="position:absolute;left:281.5px;top:495.4px;width:332px;height:14.6px;background:rgba(235,238,242,0.72);"></div>
<div style="position:absolute;left:287px;top:497px;font-size:9.8px;color:#555;white-space:nowrap;">Map data ©2017 Google, INEGI</div>
<div style="position:absolute;left:432px;top:496.5px;width:1px;height:13px;background:#999;"></div>
<div style="position:absolute;left:438px;top:497px;font-size:9.8px;color:#555;">1000 km</div>
<div style="position:absolute;left:481px;top:503px;width:53px;height:3px;border:1.3px solid #555;border-top:none;"></div>
<div style="position:absolute;left:541.5px;top:496.5px;width:1px;height:13px;background:#999;"></div>
<div style="position:absolute;left:547.5px;top:497px;font-size:9.8px;color:#555;">Terms of Use</div>
<div style="position:absolute;left:15px;top:482px;font-size:19.5px;font-weight:bold;letter-spacing:-0.5px;text-shadow:0 0 2px #fff,0 0 2px #fff;white-space:nowrap;"><span style="color:#4A86E8">G</span><span style="color:#E0433A">o</span><span style="color:#F3B81A">o</span><span style="color:#4A86E8">g</span><span style="color:#3AA757">l</span><span style="color:#E0433A">e</span></div>

<svg class="a" style="left:0;top:0" width="1149" height="805">
<path d="M878.19,41.55A212.50,212.50 0 0 1 933.64,43.29L930.53,62.26A193.28,193.28 0 0 0 880.10,60.68Z" fill="#FFFFFF" stroke="#333" stroke-width="0.75" stroke-opacity="0.45"/>
<path d="M880.10,60.68A193.28,193.28 0 0 1 930.53,62.26L927.43,81.23A174.06,174.06 0 0 0 882.01,79.81Z" fill="#FFFFFF" stroke="#333" stroke-width="0.75" stroke-opacity="0.45"/>
<path d="M882.01,79.81A174.06,174.06 0 0 1 927.43,81.23L924.32,100.20A154.83,154.83 0 0 0 883.92,98.93Z" fill="#BDF3F5" stroke="#333" stroke-width="0.75" stroke-opacity="0.45"/>
<path d="M883.92,98.93A154.83,154.83 0 0 1 924.32,100.20L921.22,119.17A135.61,135.61 0 0 0 885.83,118.06Z" fill="#20EA20" stroke="#333" stroke-width="0.75" stroke-opacity="0.45"/>
<path d="M885.83,118.06A135.61,135.61 0 0 1 921.22,119.17L918.11,138.14A116.39,116.39 0 0 0 887.74,137.19Z" fill="#16ECEC" stroke="#333" stroke-width="0.75" stroke-opacity="0.45"/>
<path d="M887.74,137.19A116.39,116.39 0 0 1 918.11,138.14L915.00,157.11A97.17,97.17 0 0 0 889.65,156.31Z" fill="#FFA000" stroke="#333" stroke-width="0.75" stroke-opacity="0.45"/>
<path d="M889.65,156.31A97.17,97.17 0 0 1 915.00,157.11L911.90,176.08A77.94,77.94 0 0 0 891.56,175.44Z" fill="#FFCC00" stroke="#333" stroke-width="0.75" stroke-opacity="0.45"/>
<path d="M891.56,175.44A77.94,77.94 0 0 1 911.90,176.08L908.79,195.05A58.72,58.72 0 0 0 893.47,194.57Z" fill="#FFF000" stroke="#333" stroke-width="0.75" stroke-opacity="0.45"/>
<path d="M893.47,194.57A58.72,58.72 0 0 1 908.79,195.05L905.68,214.02A39.50,39.50 0 0 0 895.38,213.70Z" fill="#16F088" stroke="#333" stroke-width="0.75" stroke-opacity="0.45"/>
<path d="M933.64,43.29A212.50,212.50 0 0 1 986.75,59.33L978.84,76.85A193.28,193.28 0 0 0 930.53,62.26Z" fill="#FFFFFF" stroke="#333" stroke-width="0.75" stroke-opacity="0.45"/>
<path d="M930.53,62.26A193.28,193.28 0 0 1 978.84,76.85L970.93,94.37A174.06,174.06 0 0 0 927.43,81.23Z" fill="#FFFFFF" stroke="#333" stroke-width="0.75" stroke-opacity="0.45"/>
<path d="M927.43,81.23A174.06,174.06 0 0 1 970.93,94.37L963.02,111.88A154.83,154.83 0 0 0 924.32,100.20Z" fill="#FFFFFF" stroke="#333" stroke-width="0.75" stroke-opacity="0.45"/>
<path d="M924.32,100.20A154.83,154.83 0 0 1 963.02,111.88L955.11,129.40A135.61,135.61 0 0 0 921.22,119.17Z" fill="#16F088" stroke="#333" stroke-width="0.75" stroke-opacity="0.45"/>
<path d="M921.22,119.17A135.61,135.61 0 0 1 955.11,129.40L947.20,146.92A116.39,116.39 0 0 0 918.11,138.14Z" fill="#FFFFFF" stroke="#333" stroke-width="0.75" stroke-opacity="0.45"/>
<path d="M918.11,138.14A116.39,116.39 0 0 1 947.20,146.92L939.29,164.44A97.17,97.17 0 0 0 915.00,157.11Z" fill="#FFA000" stroke="#333" stroke-width="0.75" stroke-opacity="0.45"/>
<path d="M915.00,157.11A97.17,97.17 0 0 1 939.29,164.44L931.38,181.96A77.94,77.94 0 0 0 911.90,176.08Z" fill="#FFCC00" stroke="#333" stroke-width="0.75" stroke-opacity="0.45"/>
<path d="M911.90,176.08A77.94,77.94 0 0 1 931.38,181.96L923.47,199.48A58.72,58.72 0 0 0 908.79,195.05Z" fill="#FFF000" stroke="#333" stroke-width="0.75" stroke-opacity="0.45"/>
<path d="M908.79,195.05A58.72,58.72 0 0 1 923.47,199.48L915.55,217.00A39.50,39.50 0 0 0 905.68,214.02Z" fill="#16F088" stroke="#333" stroke-width="0.75" stroke-opacity="0.45"/>
<path d="M986.75,59.33A212.50,212.50 0 0 1 1033.89,88.56L1021.72,103.43A193.28,193.28 0 0 0 978.84,76.85Z" fill="#FFFFFF" stroke="#333" stroke-width="0.75" stroke-opacity="0.45"/>
<path d="M978.84,76.85A193.28,193.28 0 0 1 1021.72,103.43L1009.54,118.31A174.06,174.06 0 0 0 970.93,94.37Z" fill="#FFFFFF" stroke="#333" stroke-width="0.75" stroke-opacity="0.45"/>
<path d="M970.93,94.37A174.06,174.06 0 0 1 1009.54,118.31L997.37,133.18A154.83,154.83 0 0 0 963.02,111.88Z" fill="#16ECEC" stroke="#333" stroke-width="0.75" stroke-opacity="0.45"/>
<path d="M963.02,111.88A154.83,154.83 0 0 1 997.37,133.18L985.19,148.06A135.61,135.61 0 0 0 955.11,129.40Z" fill="#20EA20" stroke="#333" stroke-width="0.75" stroke-opacity="0.45"/>
<path d="M955.11,129.40A135.61,135.61 0 0 1 985.19,148.06L973.02,162.93A116.39,116.39 0 0 0 947.20,146.92Z" fill="#16ECEC" stroke="#333" stroke-width="0.75" stroke-opacity="0.45"/>
<path d="M947.20,146.92A116.39,116.39 0 0 1 973.02,162.93L960.84,177.81A97.17,97.17 0 0 0 939.29,164.44Z" fill="#FFA000" stroke="#333" stroke-width="0.75" stroke-opacity="0.45"/>
<path d="M939.29,164.44A97.17,97.17 0 0 1 960.84,177.81L948.67,192.68A77.94,77.94 0 0 0 931.38,181.96Z" fill="#FFCC00" stroke="#333" stroke-width="0.75" stroke-opacity="0.45"/>
<path d="M931.38,181.96A77.94,77.94 0 0 1 948.67,192.68L936.49,207.56A58.72,58.72 0 0 0 923.47,199.48Z" fill="#FFF000" stroke="#333" stroke-width="0.75" stroke-opacity="0.45"/>
<path d="M923.47,199.48A58.72,58.72 0 0 1 936.49,207.56L924.32,222.43A39.50,39.50 0 0 0 915.55,217.00Z" fill="#16F088" stroke="#333" stroke-width="0.75" stroke-opacity="0.45"/>
<path d="M1033.89,88.56A212.50,212.50 0 0 1 1071.87,129.00L1056.26,140.21A193.28,193.28 0 0 0 1021.72,103.43Z" fill="#FFFFFF" stroke="#333" stroke-width="0.75" stroke-opacity="0.45"/>
<path d="M1021.72,103.43A193.28,193.28 0 0 1 1056.26,140.21L1040.65,151.43A174.06,174.06 0 0 0 1009.54,118.31Z" fill="#FFFFFF" stroke="#333" stroke-width="0.75" stroke-opacity="0.45"/>
<path d="M1009.54,118.31A174.06,174.06 0 0 1 1040.65,151.43L1025.04,162.65A154.83,154.83 0 0 0 997.37,133.18Z" fill="#BDF3F5" stroke="#333" stroke-width="0.75" stroke-opacity="0.45"/>
<path d="M997.37,133.18A154.83,154.83 0 0 1 1025.04,162.65L1009.43,173.87A135.61,135.61 0 0 0 985.19,148.06Z" fill="#16EAC0" stroke="#333" stroke-width="0.75" stroke-opacity="0.45"/>
<path d="M985.19,148.06A135.61,135.61 0 0 1 1009.43,173.87L993.82,185.08A116.39,116.39 0 0 0 973.02,162.93Z" fill="#98F00C" stroke="#333" stroke-width="0.75" stroke-opacity="0.45"/>
<path d="M973.02,162.93A116.39,116.39 0 0 1 993.82,185.08L978.21,196.30A97.17,97.17 0 0 0 960.84,177.81Z" fill="#FFCC00" stroke="#333" stroke-width="0.75" stroke-opacity="0.45"/>
<path d="M960.84,177.81A97.17,97.17 0 0 1 978.21,196.30L962.60,207.52A77.94,77.94 0 0 0 948.67,192.68Z" fill="#FFCC00" stroke="#333" stroke-width="0.75" stroke-opacity="0.45"/>
<path d="M948.67,192.68A77.94,77.94 0 0 1 962.60,207.52L946.99,218.73A58.72,58.72 0 0 0 936.49,207.56Z" fill="#D8F400" stroke="#333" stroke-width="0.75" stroke-opacity="0.45"/>
<path d="M936.49,207.56A58.72,58.72 0 0 1 946.99,218.73L931.38,229.95A39.50,39.50 0 0 0 924.32,222.43Z" fill="#16EAC0" stroke="#333" stroke-width="0.75" stroke-opacity="0.45"/>
<path d="M1071.87,129.00A212.50,212.50 0 0 1 1098.08,177.89L1080.10,184.68A193.28,193.28 0 0 0 1056.26,140.21Z" fill="#FFFFFF" stroke="#333" stroke-width="0.75" stroke-opacity="0.45"/>
<path d="M1056.26,140.21A193.28,193.28 0 0 1 1080.10,184.68L1062.12,191.48A174.06,174.06 0 0 0 1040.65,151.43Z" fill="#FFFFFF" stroke="#333" stroke-width="0.75" stroke-opacity="0.45"/>
<path d="M1040.65,151.43A174.06,174.06 0 0 1 1062.12,191.48L1044.14,198.27A154.83,154.83 0 0 0 1025.04,162.65Z" fill="#FFFFFF" stroke="#333" stroke-width="0.75" stroke-opacity="0.45"/>
<path d="M1025.04,162.65A154.83,154.83 0 0 1 1044.14,198.27L1026.16,205.06A135.61,135.61 0 0 0 1009.43,173.87Z" fill="#16ECEC" stroke="#333" stroke-width="0.75" stroke-opacity="0.45"/>
<path d="M1009.43,173.87A135.61,135.61 0 0 1 1026.16,205.06L1008.18,211.86A116.39,116.39 0 0 0 993.82,185.08Z" fill="#20EA20" stroke="#333" stroke-width="0.75" stroke-opacity="0.45"/>
<path d="M993.82,185.08A116.39,116.39 0 0 1 1008.18,211.86L990.19,218.65A97.17,97.17 0 0 0 978.21,196.30Z" fill="#D8F400" stroke="#333" stroke-width="0.75" stroke-opacity="0.45"/>
<path d="M978.21,196.30A97.17,97.17 0 0 1 990.19,218.65L972.21,225.45A77.94,77.94 0 0 0 962.60,207.52Z" fill="#FFCC00" stroke="#333" stroke-width="0.75" stroke-opacity="0.45"/>
<path d="M962.60,207.52A77.94,77.94 0 0 1 972.21,225.45L954.23,232.24A58.72,58.72 0 0 0 946.99,218.73Z" fill="#D8F400" stroke="#333" stroke-width="0.75" stroke-opacity="0.45"/>
<path d="M946.99,218.73A58.72,58.72 0 0 1 954.23,232.24L936.25,239.04A39.50,39.50 0 0 0 931.38,229.95Z" fill="#16ECEC" stroke="#333" stroke-width="0.75" stroke-opacity="0.45"/>
<path d="M1098.08,177.89A212.50,212.50 0 0 1 1110.75,231.89L1091.62,233.80A193.28,193.28 0 0 0 1080.10,184.68Z" fill="#FFFFFF" stroke="#333" stroke-width="0.75" stroke-opacity="0.45"/>
<path d="M1080.10,184.68A193.28,193.28 0 0 1 1091.62,233.80L1072.49,235.71A174.06,174.06 0 0 0 1062.12,191.48Z" fill="#FFFFFF" stroke="#333" stroke-width="0.75" stroke-opacity="0.45"/>
<path d="M1062.12,191.48A174.06,174.06 0 0 1 1072.49,235.71L1053.37,237.62A154.83,154.83 0 0 0 1044.14,198.27Z" fill="#BDF3F5" stroke="#333" stroke-width="0.75" stroke-opacity="0.45"/>
<path d="M1044.14,198.27A154.83,154.83 0 0 1 1053.37,237.62L1034.24,239.53A135.61,135.61 0 0 0 1026.16,205.06Z" fill="#16EAC0" stroke="#333" stroke-width="0.75" stroke-opacity="0.45"/>
<path d="M1026.16,205.06A135.61,135.61 0 0 1 1034.24,239.53L1015.11,241.44A116.39,116.39 0 0 0 1008.18,211.86Z" fill="#98F00C" stroke="#333" stroke-width="0.75" stroke-opacity="0.45"/>
<path d="M1008.18,211.86A116.39,116.39 0 0 1 1015.11,241.44L995.99,243.35A97.17,97.17 0 0 0 990.19,218.65Z" fill="#FFCC00" stroke="#333" stroke-width="0.75" stroke-opacity="0.45"/>
<path d="M990.19,218.65A97.17,97.17 0 0 1 995.99,243.35L976.86,245.26A77.94,77.94 0 0 0 972.21,225.45Z" fill="#FFF000" stroke="#333" stroke-width="0.75" stroke-opacity="0.45"/>
<path d="M972.21,225.45A77.94,77.94 0 0 1 976.86,245.26L957.73,247.17A58.72,58.72 0 0 0 954.23,232.24Z" fill="#20E858" stroke="#333" stroke-width="0.75" stroke-opacity="0.45"/>
<path d="M954.23,232.24A58.72,58.72 0 0 1 957.73,247.17L938.60,249.08A39.50,39.50 0 0 0 936.25,239.04Z" fill="#FFFFFF" stroke="#333" stroke-width="0.75" stroke-opacity="0.45"/>
<path d="M1110.75,231.89A212.50,212.50 0 0 1 1109.01,287.34L1090.04,284.23A193.28,193.28 0 0 0 1091.62,233.80Z" fill="#FFFFFF" stroke="#333" stroke-width="0.75" stroke-opacity="0.45"/>
<path d="M1091.62,233.80A193.28,193.28 0 0 1 1090.04,284.23L1071.07,281.13A174.06,174.06 0 0 0 1072.49,235.71Z" fill="#FFFFFF" stroke="#333" stroke-width="0.75" stroke-opacity="0.45"/>
<path d="M1072.49,235.71A174.06,174.06 0 0 1 1071.07,281.13L1052.10,278.02A154.83,154.83 0 0 0 1053.37,237.62Z" fill="#FFFFFF" stroke="#333" stroke-width="0.75" stroke-opacity="0.45"/>
<path d="M1053.37,237.62A154.83,154.83 0 0 1 1052.10,278.02L1033.13,274.92A135.61,135.61 0 0 0 1034.24,239.53Z" fill="#16F088" stroke="#333" stroke-width="0.75" stroke-opacity="0.45"/>
<path d="M1034.24,239.53A135.61,135.61 0 0 1 1033.13,274.92L1014.16,271.81A116.39,116.39 0 0 0 1015.11,241.44Z" fill="#16EAC0" stroke="#333" stroke-width="0.75" stroke-opacity="0.45"/>
<path d="M1015.11,241.44A116.39,116.39 0 0 1 1014.16,271.81L995.19,268.70A97.17,97.17 0 0 0 995.99,243.35Z" fill="#FFF000" stroke="#333" stroke-width="0.75" stroke-opacity="0.45"/>
<path d="M995.99,243.35A97.17,97.17 0 0 1 995.19,268.70L976.22,265.60A77.94,77.94 0 0 0 976.86,245.26Z" fill="#20EA20" stroke="#333" stroke-width="0.75" stroke-opacity="0.45"/>
<path d="M976.86,245.26A77.94,77.94 0 0 1 976.22,265.60L957.25,262.49A58.72,58.72 0 0 0 957.73,247.17Z" fill="#BDF3F5" stroke="#333" stroke-width="0.75" stroke-opacity="0.45"/>
<path d="M957.73,247.17A58.72,58.72 0 0 1 957.25,262.49L938.28,259.38A39.50,39.50 0 0 0 938.60,249.08Z" fill="#FFFFFF" stroke="#333" stroke-width="0.75" stroke-opacity="0.45"/>
<path d="M1109.01,287.34A212.50,212.50 0 0 1 1092.97,340.45L1075.45,332.54A193.28,193.28 0 0 0 1090.04,284.23Z" fill="#FFFFFF" stroke="#333" stroke-width="0.75" stroke-opacity="0.45"/>
<path d="M1090.04,284.23A193.28,193.28 0 0 1 1075.45,332.54L1057.93,324.63A174.06,174.06 0 0 0 1071.07,281.13Z" fill="#FFFFFF" stroke="#333" stroke-width="0.75" stroke-opacity="0.45"/>
<path d="M1071.07,281.13A174.06,174.06 0 0 1 1057.93,324.63L1040.42,316.72A154.83,154.83 0 0 0 1052.10,278.02Z" fill="#FFFFFF" stroke="#333" stroke-width="0.75" stroke-opacity="0.45"/>
<path d="M1052.10,278.02A154.83,154.83 0 0 1 1040.42,316.72L1022.90,308.81A135.61,135.61 0 0 0 1033.13,274.92Z" fill="#FFFFFF" stroke="#333" stroke-width="0.75" stroke-opacity="0.45"/>
<path d="M1033.13,274.92A135.61,135.61 0 0 1 1022.90,308.81L1005.38,300.90A116.39,116.39 0 0 0 1014.16,271.81Z" fill="#FFCC00" stroke="#333" stroke-width="0.75" stroke-opacity="0.45"/>
<path d="M1014.16,271.81A116.39,116.39 0 0 1 1005.38,300.90L987.86,292.99A97.17,97.17 0 0 0 995.19,268.70Z" fill="#FFF000" stroke="#333" stroke-width="0.75" stroke-opacity="0.45"/>
<path d="M995.19,268.70A97.17,97.17 0 0 1 987.86,292.99L970.34,285.08A77.94,77.94 0 0 0 976.22,265.60Z" fill="#BDF3F5" stroke="#333" stroke-width="0.75" stroke-opacity="0.45"/>
<path d="M976.22,265.60A77.94,77.94 0 0 1 970.34,285.08L952.82,277.17A58.72,58.72 0 0 0 957.25,262.49Z" fill="#FFFFFF" stroke="#333" stroke-width="0.75" stroke-opacity="0.45"/>
<path d="M957.25,262.49A58.72,58.72 0 0 1 952.82,277.17L935.30,269.25A39.50,39.50 0 0 0 938.28,259.38Z" fill="#FFFFFF" stroke="#333" stroke-width="0.75" stroke-opacity="0.45"/>
<path d="M1092.97,340.45A212.50,212.50 0 0 1 1063.74,387.59L1048.87,375.42A193.28,193.28 0 0 0 1075.45,332.54Z" fill="#FFFFFF" stroke="#333" stroke-width="0.75" stroke-opacity="0.45"/>
<path d="M1075.45,332.54A193.28,193.28 0 0 1 1048.87,375.42L1033.99,363.24A174.06,174.06 0 0 0 1057.93,324.63Z" fill="#FFFFFF" stroke="#333" stroke-width="0.75" stroke-opacity="0.45"/>
<path d="M1057.93,324.63A174.06,174.06 0 0 1 1033.99,363.24L1019.12,351.07A154.83,154.83 0 0 0 1040.42,316.72Z" fill="#FFFFFF" stroke="#333" stroke-width="0.75" stroke-opacity="0.45"/>
<path d="M1040.42,316.72A154.83,154.83 0 0 1 1019.12,351.07L1004.24,338.89A135.61,135.61 0 0 0 1022.90,308.81Z" fill="#16F088" stroke="#333" stroke-width="0.75" stroke-opacity="0.45"/>
<path d="M1022.90,308.81A135.61,135.61 0 0 1 1004.24,338.89L989.37,326.72A116.39,116.39 0 0 0 1005.38,300.90Z" fill="#98F00C" stroke="#333" stroke-width="0.75" stroke-opacity="0.45"/>
<path d="M1005.38,300.90A116.39,116.39 0 0 1 989.37,326.72L974.49,314.54A97.17,97.17 0 0 0 987.86,292.99Z" fill="#16EAC0" stroke="#333" stroke-width="0.75" stroke-opacity="0.45"/>
<path d="M987.86,292.99A97.17,97.17 0 0 1 974.49,314.54L959.62,302.37A77.94,77.94 0 0 0 970.34,285.08Z" fill="#FFFFFF" stroke="#333" stroke-width="0.75" stroke-opacity="0.45"/>
<path d="M970.34,285.08A77.94,77.94 0 0 1 959.62,302.37L944.74,290.19A58.72,58.72 0 0 0 952.82,277.17Z" fill="#FFFFFF" stroke="#333" stroke-width="0.75" stroke-opacity="0.45"/>
<path d="M952.82,277.17A58.72,58.72 0 0 1 944.74,290.19L929.87,278.02A39.50,39.50 0 0 0 935.30,269.25Z" fill="#FFFFFF" stroke="#333" stroke-width="0.75" stroke-opacity="0.45"/>
<path d="M1063.74,387.59A212.50,212.50 0 0 1 1023.30,425.57L1012.09,409.96A193.28,193.28 0 0 0 1048.87,375.42Z" fill="#FFFFFF" stroke="#333" stroke-width="0.75" stroke-opacity="0.45"/>
<path d="M1048.87,375.42A193.28,193.28 0 0 1 1012.09,409.96L1000.87,394.35A174.06,174.06 0 0 0 1033.99,363.24Z" fill="#FFFFFF" stroke="#333" stroke-width="0.75" stroke-opacity="0.45"/>
<path d="M1033.99,363.24A174.06,174.06 0 0 1 1000.87,394.35L989.65,378.74A154.83,154.83 0 0 0 1019.12,351.07Z" fill="#FFFFFF" stroke="#333" stroke-width="0.75" stroke-opacity="0.45"/>
<path d="M1019.12,351.07A154.83,154.83 0 0 1 989.65,378.74L978.43,363.13A135.61,135.61 0 0 0 1004.24,338.89Z" fill="#16ECEC" stroke="#333" stroke-width="0.75" stroke-opacity="0.45"/>
<path d="M1004.24,338.89A135.61,135.61 0 0 1 978.43,363.13L967.22,347.52A116.39,116.39 0 0 0 989.37,326.72Z" fill="#98F00C" stroke="#333" stroke-width="0.75" stroke-opacity="0.45"/>
<path d="M989.37,326.72A116.39,116.39 0 0 1 967.22,347.52L956.00,331.91A97.17,97.17 0 0 0 974.49,314.54Z" fill="#16ECEC" stroke="#333" stroke-width="0.75" stroke-opacity="0.45"/>
<path d="M974.49,314.54A97.17,97.17 0 0 1 956.00,331.91L944.78,316.30A77.94,77.94 0 0 0 959.62,302.37Z" fill="#FFFFFF" stroke="#333" stroke-width="0.75" stroke-opacity="0.45"/>
<path d="M959.62,302.37A77.94,77.94 0 0 1 944.78,316.30L933.57,300.69A58.72,58.72 0 0 0 944.74,290.19Z" fill="#FFFFFF" stroke="#333" stroke-width="0.75" stroke-opacity="0.45"/>
<path d="M944.74,290.19A58.72,58.72 0 0 1 933.57,300.69L922.35,285.08A39.50,39.50 0 0 0 929.87,278.02Z" fill="#FFFFFF" stroke="#333" stroke-width="0.75" stroke-opacity="0.45"/>
<path d="M1023.30,425.57A212.50,212.50 0 0 1 974.41,451.78L967.62,433.80A193.28,193.28 0 0 0 1012.09,409.96Z" fill="#FFFFFF" stroke="#333" stroke-width="0.75" stroke-opacity="0.45"/>
<path d="M1012.09,409.96A193.28,193.28 0 0 1 967.62,433.80L960.82,415.82A174.06,174.06 0 0 0 1000.87,394.35Z" fill="#16ECEC" stroke="#333" stroke-width="0.75" stroke-opacity="0.45"/>
<path d="M1000.87,394.35A174.06,174.06 0 0 1 960.82,415.82L954.03,397.84A154.83,154.83 0 0 0 989.65,378.74Z" fill="#98F00C" stroke="#333" stroke-width="0.75" stroke-opacity="0.45"/>
<path d="M989.65,378.74A154.83,154.83 0 0 1 954.03,397.84L947.24,379.86A135.61,135.61 0 0 0 978.43,363.13Z" fill="#D8F400" stroke="#333" stroke-width="0.75" stroke-opacity="0.45"/>
<path d="M978.43,363.13A135.61,135.61 0 0 1 947.24,379.86L940.44,361.88A116.39,116.39 0 0 0 967.22,347.52Z" fill="#FFF000" stroke="#333" stroke-width="0.75" stroke-opacity="0.45"/>
<path d="M967.22,347.52A116.39,116.39 0 0 1 940.44,361.88L933.65,343.89A97.17,97.17 0 0 0 956.00,331.91Z" fill="#16ECEC" stroke="#333" stroke-width="0.75" stroke-opacity="0.45"/>
<path d="M956.00,331.91A97.17,97.17 0 0 1 933.65,343.89L926.85,325.91A77.94,77.94 0 0 0 944.78,316.30Z" fill="#FFFFFF" stroke="#333" stroke-width="0.75" stroke-opacity="0.45"/>
<path d="M944.78,316.30A77.94,77.94 0 0 1 926.85,325.91L920.06,307.93A58.72,58.72 0 0 0 933.57,300.69Z" fill="#FFFFFF" stroke="#333" stroke-width="0.75" stroke-opacity="0.45"/>
<path d="M933.57,300.69A58.72,58.72 0 0 1 920.06,307.93L913.26,289.95A39.50,39.50 0 0 0 922.35,285.08Z" fill="#FFFFFF" stroke="#333" stroke-width="0.75" stroke-opacity="0.45"/>
<path d="M974.41,451.78A212.50,212.50 0 0 1 920.41,464.45L918.50,445.32A193.28,193.28 0 0 0 967.62,433.80Z" fill="#FFFFFF" stroke="#333" stroke-width="0.75" stroke-opacity="0.45"/>
<path d="M967.62,433.80A193.28,193.28 0 0 1 918.50,445.32L916.59,426.19A174.06,174.06 0 0 0 960.82,415.82Z" fill="#16ECEC" stroke="#333" stroke-width="0.75" stroke-opacity="0.45"/>
<path d="M960.82,415.82A174.06,174.06 0 0 1 916.59,426.19L914.68,407.07A154.83,154.83 0 0 0 954.03,397.84Z" fill="#D8F400" stroke="#333" stroke-width="0.75" stroke-opacity="0.45"/>
<path d="M954.03,397.84A154.83,154.83 0 0 1 914.68,407.07L912.77,387.94A135.61,135.61 0 0 0 947.24,379.86Z" fill="#FFCC00" stroke="#333" stroke-width="0.75" stroke-opacity="0.45"/>
<path d="M947.24,379.86A135.61,135.61 0 0 1 912.77,387.94L910.86,368.81A116.39,116.39 0 0 0 940.44,361.88Z" fill="#FFF000" stroke="#333" stroke-width="0.75" stroke-opacity="0.45"/>
<path d="M940.44,361.88A116.39,116.39 0 0 1 910.86,368.81L908.95,349.69A97.17,97.17 0 0 0 933.65,343.89Z" fill="#BDF3F5" stroke="#333" stroke-width="0.75" stroke-opacity="0.45"/>
<path d="M933.65,343.89A97.17,97.17 0 0 1 908.95,349.69L907.04,330.56A77.94,77.94 0 0 0 926.85,325.91Z" fill="#FFFFFF" stroke="#333" stroke-width="0.75" stroke-opacity="0.45"/>
<path d="M926.85,325.91A77.94,77.94 0 0 1 907.04,330.56L905.13,311.43A58.72,58.72 0 0 0 920.06,307.93Z" fill="#FFFFFF" stroke="#333" stroke-width="0.75" stroke-opacity="0.45"/>
<path d="M920.06,307.93A58.72,58.72 0 0 1 905.13,311.43L903.22,292.30A39.50,39.50 0 0 0 913.26,289.95Z" fill="#FFFFFF" stroke="#333" stroke-width="0.75" stroke-opacity="0.45"/>
<path d="M920.41,464.45A212.50,212.50 0 0 1 864.96,462.71L868.07,443.74A193.28,193.28 0 0 0 918.50,445.32Z" fill="#BDF3F5" stroke="#333" stroke-width="0.75" stroke-opacity="0.45"/>
<path d="M918.50,445.32A193.28,193.28 0 0 1 868.07,443.74L871.17,424.77A174.06,174.06 0 0 0 916.59,426.19Z" fill="#20EA20" stroke="#333" stroke-width="0.75" stroke-opacity="0.45"/>
<path d="M916.59,426.19A174.06,174.06 0 0 1 871.17,424.77L874.28,405.80A154.83,154.83 0 0 0 914.68,407.07Z" fill="#FFF000" stroke="#333" stroke-width="0.75" stroke-opacity="0.45"/>
<path d="M914.68,407.07A154.83,154.83 0 0 1 874.28,405.80L877.38,386.83A135.61,135.61 0 0 0 912.77,387.94Z" fill="#FFCC00" stroke="#333" stroke-width="0.75" stroke-opacity="0.45"/>
<path d="M912.77,387.94A135.61,135.61 0 0 1 877.38,386.83L880.49,367.86A116.39,116.39 0 0 0 910.86,368.81Z" fill="#FFF000" stroke="#333" stroke-width="0.75" stroke-opacity="0.45"/>
<path d="M910.86,368.81A116.39,116.39 0 0 1 880.49,367.86L883.60,348.89A97.17,97.17 0 0 0 908.95,349.69Z" fill="#FFFFFF" stroke="#333" stroke-width="0.75" stroke-opacity="0.45"/>
<path d="M908.95,349.69A97.17,97.17 0 0 1 883.60,348.89L886.70,329.92A77.94,77.94 0 0 0 907.04,330.56Z" fill="#FFFFFF" stroke="#333" stroke-width="0.75" stroke-opacity="0.45"/>
<path d="M907.04,330.56A77.94,77.94 0 0 1 886.70,329.92L889.81,310.95A58.72,58.72 0 0 0 905.13,311.43Z" fill="#FFFFFF" stroke="#333" stroke-width="0.75" stroke-opacity="0.45"/>
<path d="M905.13,311.43A58.72,58.72 0 0 1 889.81,310.95L892.92,291.98A39.50,39.50 0 0 0 903.22,292.30Z" fill="#FFFFFF" stroke="#333" stroke-width="0.75" stroke-opacity="0.45"/>
<path d="M864.96,462.71A212.50,212.50 0 0 1 811.85,446.67L819.76,429.15A193.28,193.28 0 0 0 868.07,443.74Z" fill="#16ECEC" stroke="#333" stroke-width="0.75" stroke-opacity="0.45"/>
<path d="M868.07,443.74A193.28,193.28 0 0 1 819.76,429.15L827.67,411.63A174.06,174.06 0 0 0 871.17,424.77Z" fill="#98F00C" stroke="#333" stroke-width="0.75" stroke-opacity="0.45"/>
<path d="M871.17,424.77A174.06,174.06 0 0 1 827.67,411.63L835.58,394.12A154.83,154.83 0 0 0 874.28,405.80Z" fill="#FFCC00" stroke="#333" stroke-width="0.75" stroke-opacity="0.45"/>
<path d="M874.28,405.80A154.83,154.83 0 0 1 835.58,394.12L843.49,376.60A135.61,135.61 0 0 0 877.38,386.83Z" fill="#FFCC00" stroke="#333" stroke-width="0.75" stroke-opacity="0.45"/>
<path d="M877.38,386.83A135.61,135.61 0 0 1 843.49,376.60L851.40,359.08A116.39,116.39 0 0 0 880.49,367.86Z" fill="#FFF000" stroke="#333" stroke-width="0.75" stroke-opacity="0.45"/>
<path d="M880.49,367.86A116.39,116.39 0 0 1 851.40,359.08L859.31,341.56A97.17,97.17 0 0 0 883.60,348.89Z" fill="#FFFFFF" stroke="#333" stroke-width="0.75" stroke-opacity="0.45"/>
<path d="M883.60,348.89A97.17,97.17 0 0 1 859.31,341.56L867.22,324.04A77.94,77.94 0 0 0 886.70,329.92Z" fill="#FFFFFF" stroke="#333" stroke-width="0.75" stroke-opacity="0.45"/>
<path d="M886.70,329.92A77.94,77.94 0 0 1 867.22,324.04L875.13,306.52A58.72,58.72 0 0 0 889.81,310.95Z" fill="#FFFFFF" stroke="#333" stroke-width="0.75" stroke-opacity="0.45"/>
<path d="M889.81,310.95A58.72,58.72 0 0 1 875.13,306.52L883.05,289.00A39.50,39.50 0 0 0 892.92,291.98Z" fill="#FFFFFF" stroke="#333" stroke-width="0.75" stroke-opacity="0.45"/>
<path d="M811.85,446.67A212.50,212.50 0 0 1 764.71,417.44L776.88,402.57A193.28,193.28 0 0 0 819.76,429.15Z" fill="#16ECEC" stroke="#333" stroke-width="0.75" stroke-opacity="0.45"/>
<path d="M819.76,429.15A193.28,193.28 0 0 1 776.88,402.57L789.06,387.69A174.06,174.06 0 0 0 827.67,411.63Z" fill="#98F00C" stroke="#333" stroke-width="0.75" stroke-opacity="0.45"/>
<path d="M827.67,411.63A174.06,174.06 0 0 1 789.06,387.69L801.23,372.82A154.83,154.83 0 0 0 835.58,394.12Z" fill="#FFCC00" stroke="#333" stroke-width="0.75" stroke-opacity="0.45"/>
<path d="M835.58,394.12A154.83,154.83 0 0 1 801.23,372.82L813.41,357.94A135.61,135.61 0 0 0 843.49,376.60Z" fill="#FFF000" stroke="#333" stroke-width="0.75" stroke-opacity="0.45"/>
<path d="M843.49,376.60A135.61,135.61 0 0 1 813.41,357.94L825.58,343.07A116.39,116.39 0 0 0 851.40,359.08Z" fill="#FFF000" stroke="#333" stroke-width="0.75" stroke-opacity="0.45"/>
<path d="M851.40,359.08A116.39,116.39 0 0 1 825.58,343.07L837.76,328.19A97.17,97.17 0 0 0 859.31,341.56Z" fill="#FFFFFF" stroke="#333" stroke-width="0.75" stroke-opacity="0.45"/>
<path d="M859.31,341.56A97.17,97.17 0 0 1 837.76,328.19L849.93,313.32A77.94,77.94 0 0 0 867.22,324.04Z" fill="#FFFFFF" stroke="#333" stroke-width="0.75" stroke-opacity="0.45"/>
<path d="M867.22,324.04A77.94,77.94 0 0 1 849.93,313.32L862.11,298.44A58.72,58.72 0 0 0 875.13,306.52Z" fill="#FFFFFF" stroke="#333" stroke-width="0.75" stroke-opacity="0.45"/>
<path d="M875.13,306.52A58.72,58.72 0 0 1 862.11,298.44L874.28,283.57A39.50,39.50 0 0 0 883.05,289.00Z" fill="#FFFFFF" stroke="#333" stroke-width="0.75" stroke-opacity="0.45"/>
<path d="M764.71,417.44A212.50,212.50 0 0 1 726.73,377.00L742.34,365.79A193.28,193.28 0 0 0 776.88,402.57Z" fill="#16ECEC" stroke="#333" stroke-width="0.75" stroke-opacity="0.45"/>
<path d="M776.88,402.57A193.28,193.28 0 0 1 742.34,365.79L757.95,354.57A174.06,174.06 0 0 0 789.06,387.69Z" fill="#98F00C" stroke="#333" stroke-width="0.75" stroke-opacity="0.45"/>
<path d="M789.06,387.69A174.06,174.06 0 0 1 757.95,354.57L773.56,343.35A154.83,154.83 0 0 0 801.23,372.82Z" fill="#BDF3F5" stroke="#333" stroke-width="0.75" stroke-opacity="0.45"/>
<path d="M801.23,372.82A154.83,154.83 0 0 1 773.56,343.35L789.17,332.13A135.61,135.61 0 0 0 813.41,357.94Z" fill="#FFFFFF" stroke="#333" stroke-width="0.75" stroke-opacity="0.45"/>
<path d="M813.41,357.94A135.61,135.61 0 0 1 789.17,332.13L804.78,320.92A116.39,116.39 0 0 0 825.58,343.07Z" fill="#FFA000" stroke="#333" stroke-width="0.75" stroke-opacity="0.45"/>
<path d="M825.58,343.07A116.39,116.39 0 0 1 804.78,320.92L820.39,309.70A97.17,97.17 0 0 0 837.76,328.19Z" fill="#BDF3F5" stroke="#333" stroke-width="0.75" stroke-opacity="0.45"/>
<path d="M837.76,328.19A97.17,97.17 0 0 1 820.39,309.70L836.00,298.48A77.94,77.94 0 0 0 849.93,313.32Z" fill="#FFFFFF" stroke="#333" stroke-width="0.75" stroke-opacity="0.45"/>
<path d="M849.93,313.32A77.94,77.94 0 0 1 836.00,298.48L851.61,287.27A58.72,58.72 0 0 0 862.11,298.44Z" fill="#FFFFFF" stroke="#333" stroke-width="0.75" stroke-opacity="0.45"/>
<path d="M862.11,298.44A58.72,58.72 0 0 1 851.61,287.27L867.22,276.05A39.50,39.50 0 0 0 874.28,283.57Z" fill="#FFFFFF" stroke="#333" stroke-width="0.75" stroke-opacity="0.45"/>
<path d="M726.73,377.00A212.50,212.50 0 0 1 700.52,328.11L718.50,321.32A193.28,193.28 0 0 0 742.34,365.79Z" fill="#16ECEC" stroke="#333" stroke-width="0.75" stroke-opacity="0.45"/>
<path d="M742.34,365.79A193.28,193.28 0 0 1 718.50,321.32L736.48,314.52A174.06,174.06 0 0 0 757.95,354.57Z" fill="#98F00C" stroke="#333" stroke-width="0.75" stroke-opacity="0.45"/>
<path d="M757.95,354.57A174.06,174.06 0 0 1 736.48,314.52L754.46,307.73A154.83,154.83 0 0 0 773.56,343.35Z" fill="#BDF3F5" stroke="#333" stroke-width="0.75" stroke-opacity="0.45"/>
<path d="M773.56,343.35A154.83,154.83 0 0 1 754.46,307.73L772.44,300.94A135.61,135.61 0 0 0 789.17,332.13Z" fill="#20EA20" stroke="#333" stroke-width="0.75" stroke-opacity="0.45"/>
<path d="M789.17,332.13A135.61,135.61 0 0 1 772.44,300.94L790.42,294.14A116.39,116.39 0 0 0 804.78,320.92Z" fill="#FFA000" stroke="#333" stroke-width="0.75" stroke-opacity="0.45"/>
<path d="M804.78,320.92A116.39,116.39 0 0 1 790.42,294.14L808.41,287.35A97.17,97.17 0 0 0 820.39,309.70Z" fill="#16EAC0" stroke="#333" stroke-width="0.75" stroke-opacity="0.45"/>
<path d="M820.39,309.70A97.17,97.17 0 0 1 808.41,287.35L826.39,280.55A77.94,77.94 0 0 0 836.00,298.48Z" fill="#FFFFFF" stroke="#333" stroke-width="0.75" stroke-opacity="0.45"/>
<path d="M836.00,298.48A77.94,77.94 0 0 1 826.39,280.55L844.37,273.76A58.72,58.72 0 0 0 851.61,287.27Z" fill="#FFFFFF" stroke="#333" stroke-width="0.75" stroke-opacity="0.45"/>
<path d="M851.61,287.27A58.72,58.72 0 0 1 844.37,273.76L862.35,266.96A39.50,39.50 0 0 0 867.22,276.05Z" fill="#FFFFFF" stroke="#333" stroke-width="0.75" stroke-opacity="0.45"/>
<path d="M700.52,328.11A212.50,212.50 0 0 1 687.85,274.11L706.98,272.20A193.28,193.28 0 0 0 718.50,321.32Z" fill="#16EAC0" stroke="#333" stroke-width="0.75" stroke-opacity="0.45"/>
<path d="M718.50,321.32A193.28,193.28 0 0 1 706.98,272.20L726.11,270.29A174.06,174.06 0 0 0 736.48,314.52Z" fill="#D8F400" stroke="#333" stroke-width="0.75" stroke-opacity="0.45"/>
<path d="M736.48,314.52A174.06,174.06 0 0 1 726.11,270.29L745.23,268.38A154.83,154.83 0 0 0 754.46,307.73Z" fill="#BDF3F5" stroke="#333" stroke-width="0.75" stroke-opacity="0.45"/>
<path d="M754.46,307.73A154.83,154.83 0 0 1 745.23,268.38L764.36,266.47A135.61,135.61 0 0 0 772.44,300.94Z" fill="#FFF000" stroke="#333" stroke-width="0.75" stroke-opacity="0.45"/>
<path d="M772.44,300.94A135.61,135.61 0 0 1 764.36,266.47L783.49,264.56A116.39,116.39 0 0 0 790.42,294.14Z" fill="#FF5500" stroke="#333" stroke-width="0.75" stroke-opacity="0.45"/>
<path d="M790.42,294.14A116.39,116.39 0 0 1 783.49,264.56L802.61,262.65A97.17,97.17 0 0 0 808.41,287.35Z" fill="#FFF000" stroke="#333" stroke-width="0.75" stroke-opacity="0.45"/>
<path d="M808.41,287.35A97.17,97.17 0 0 1 802.61,262.65L821.74,260.74A77.94,77.94 0 0 0 826.39,280.55Z" fill="#16ECEC" stroke="#333" stroke-width="0.75" stroke-opacity="0.45"/>
<path d="M826.39,280.55A77.94,77.94 0 0 1 821.74,260.74L840.87,258.83A58.72,58.72 0 0 0 844.37,273.76Z" fill="#FFFFFF" stroke="#333" stroke-width="0.75" stroke-opacity="0.45"/>
<path d="M844.37,273.76A58.72,58.72 0 0 1 840.87,258.83L860.00,256.92A39.50,39.50 0 0 0 862.35,266.96Z" fill="#FFFFFF" stroke="#333" stroke-width="0.75" stroke-opacity="0.45"/>
<path d="M687.85,274.11A212.50,212.50 0 0 1 689.59,218.66L708.56,221.77A193.28,193.28 0 0 0 706.98,272.20Z" fill="#20EA20" stroke="#333" stroke-width="0.75" stroke-opacity="0.45"/>
<path d="M706.98,272.20A193.28,193.28 0 0 1 708.56,221.77L727.53,224.87A174.06,174.06 0 0 0 726.11,270.29Z" fill="#FFF000" stroke="#333" stroke-width="0.75" stroke-opacity="0.45"/>
<path d="M726.11,270.29A174.06,174.06 0 0 1 727.53,224.87L746.50,227.98A154.83,154.83 0 0 0 745.23,268.38Z" fill="#16EAC0" stroke="#333" stroke-width="0.75" stroke-opacity="0.45"/>
<path d="M745.23,268.38A154.83,154.83 0 0 1 746.50,227.98L765.47,231.08A135.61,135.61 0 0 0 764.36,266.47Z" fill="#FFF000" stroke="#333" stroke-width="0.75" stroke-opacity="0.45"/>
<path d="M764.36,266.47A135.61,135.61 0 0 1 765.47,231.08L784.44,234.19A116.39,116.39 0 0 0 783.49,264.56Z" fill="#FF5500" stroke="#333" stroke-width="0.75" stroke-opacity="0.45"/>
<path d="M783.49,264.56A116.39,116.39 0 0 1 784.44,234.19L803.41,237.30A97.17,97.17 0 0 0 802.61,262.65Z" fill="#FFCC00" stroke="#333" stroke-width="0.75" stroke-opacity="0.45"/>
<path d="M802.61,262.65A97.17,97.17 0 0 1 803.41,237.30L822.38,240.40A77.94,77.94 0 0 0 821.74,260.74Z" fill="#98F00C" stroke="#333" stroke-width="0.75" stroke-opacity="0.45"/>
<path d="M821.74,260.74A77.94,77.94 0 0 1 822.38,240.40L841.35,243.51A58.72,58.72 0 0 0 840.87,258.83Z" fill="#BDF3F5" stroke="#333" stroke-width="0.75" stroke-opacity="0.45"/>
<path d="M840.87,258.83A58.72,58.72 0 0 1 841.35,243.51L860.32,246.62A39.50,39.50 0 0 0 860.00,256.92Z" fill="#FFFFFF" stroke="#333" stroke-width="0.75" stroke-opacity="0.45"/>
<path d="M689.59,218.66A212.50,212.50 0 0 1 705.63,165.55L723.15,173.46A193.28,193.28 0 0 0 708.56,221.77Z" fill="#20EA20" stroke="#333" stroke-width="0.75" stroke-opacity="0.45"/>
<path d="M708.56,221.77A193.28,193.28 0 0 1 723.15,173.46L740.67,181.37A174.06,174.06 0 0 0 727.53,224.87Z" fill="#FFF000" stroke="#333" stroke-width="0.75" stroke-opacity="0.45"/>
<path d="M727.53,224.87A174.06,174.06 0 0 1 740.67,181.37L758.18,189.28A154.83,154.83 0 0 0 746.50,227.98Z" fill="#20EA20" stroke="#333" stroke-width="0.75" stroke-opacity="0.45"/>
<path d="M746.50,227.98A154.83,154.83 0 0 1 758.18,189.28L775.70,197.19A135.61,135.61 0 0 0 765.47,231.08Z" fill="#FFA000" stroke="#333" stroke-width="0.75" stroke-opacity="0.45"/>
<path d="M765.47,231.08A135.61,135.61 0 0 1 775.70,197.19L793.22,205.10A116.39,116.39 0 0 0 784.44,234.19Z" fill="#FF5500" stroke="#333" stroke-width="0.75" stroke-opacity="0.45"/>
<path d="M784.44,234.19A116.39,116.39 0 0 1 793.22,205.10L810.74,213.01A97.17,97.17 0 0 0 803.41,237.30Z" fill="#FFA000" stroke="#333" stroke-width="0.75" stroke-opacity="0.45"/>
<path d="M803.41,237.30A97.17,97.17 0 0 1 810.74,213.01L828.26,220.92A77.94,77.94 0 0 0 822.38,240.40Z" fill="#FFF000" stroke="#333" stroke-width="0.75" stroke-opacity="0.45"/>
<path d="M822.38,240.40A77.94,77.94 0 0 1 828.26,220.92L845.78,228.83A58.72,58.72 0 0 0 841.35,243.51Z" fill="#20E858" stroke="#333" stroke-width="0.75" stroke-opacity="0.45"/>
<path d="M841.35,243.51A58.72,58.72 0 0 1 845.78,228.83L863.30,236.75A39.50,39.50 0 0 0 860.32,246.62Z" fill="#FFFFFF" stroke="#333" stroke-width="0.75" stroke-opacity="0.45"/>
<path d="M705.63,165.55A212.50,212.50 0 0 1 734.86,118.41L749.73,130.58A193.28,193.28 0 0 0 723.15,173.46Z" fill="#16EAC0" stroke="#333" stroke-width="0.75" stroke-opacity="0.45"/>
<path d="M723.15,173.46A193.28,193.28 0 0 1 749.73,130.58L764.61,142.76A174.06,174.06 0 0 0 740.67,181.37Z" fill="#98F00C" stroke="#333" stroke-width="0.75" stroke-opacity="0.45"/>
<path d="M740.67,181.37A174.06,174.06 0 0 1 764.61,142.76L779.48,154.93A154.83,154.83 0 0 0 758.18,189.28Z" fill="#16ECEC" stroke="#333" stroke-width="0.75" stroke-opacity="0.45"/>
<path d="M758.18,189.28A154.83,154.83 0 0 1 779.48,154.93L794.36,167.11A135.61,135.61 0 0 0 775.70,197.19Z" fill="#FFF000" stroke="#333" stroke-width="0.75" stroke-opacity="0.45"/>
<path d="M775.70,197.19A135.61,135.61 0 0 1 794.36,167.11L809.23,179.28A116.39,116.39 0 0 0 793.22,205.10Z" fill="#FF5500" stroke="#333" stroke-width="0.75" stroke-opacity="0.45"/>
<path d="M793.22,205.10A116.39,116.39 0 0 1 809.23,179.28L824.11,191.46A97.17,97.17 0 0 0 810.74,213.01Z" fill="#FF7800" stroke="#333" stroke-width="0.75" stroke-opacity="0.45"/>
<path d="M810.74,213.01A97.17,97.17 0 0 1 824.11,191.46L838.98,203.63A77.94,77.94 0 0 0 828.26,220.92Z" fill="#FFF000" stroke="#333" stroke-width="0.75" stroke-opacity="0.45"/>
<path d="M828.26,220.92A77.94,77.94 0 0 1 838.98,203.63L853.86,215.81A58.72,58.72 0 0 0 845.78,228.83Z" fill="#20EA20" stroke="#333" stroke-width="0.75" stroke-opacity="0.45"/>
<path d="M845.78,228.83A58.72,58.72 0 0 1 853.86,215.81L868.73,227.98A39.50,39.50 0 0 0 863.30,236.75Z" fill="#16ECEC" stroke="#333" stroke-width="0.75" stroke-opacity="0.45"/>
<path d="M734.86,118.41A212.50,212.50 0 0 1 775.30,80.43L786.51,96.04A193.28,193.28 0 0 0 749.73,130.58Z" fill="#FFFFFF" stroke="#333" stroke-width="0.75" stroke-opacity="0.45"/>
<path d="M749.73,130.58A193.28,193.28 0 0 1 786.51,96.04L797.73,111.65A174.06,174.06 0 0 0 764.61,142.76Z" fill="#16EAC0" stroke="#333" stroke-width="0.75" stroke-opacity="0.45"/>
<path d="M764.61,142.76A174.06,174.06 0 0 1 797.73,111.65L808.95,127.26A154.83,154.83 0 0 0 779.48,154.93Z" fill="#D8F400" stroke="#333" stroke-width="0.75" stroke-opacity="0.45"/>
<path d="M779.48,154.93A154.83,154.83 0 0 1 808.95,127.26L820.17,142.87A135.61,135.61 0 0 0 794.36,167.11Z" fill="#16EAC0" stroke="#333" stroke-width="0.75" stroke-opacity="0.45"/>
<path d="M794.36,167.11A135.61,135.61 0 0 1 820.17,142.87L831.38,158.48A116.39,116.39 0 0 0 809.23,179.28Z" fill="#FF7800" stroke="#333" stroke-width="0.75" stroke-opacity="0.45"/>
<path d="M809.23,179.28A116.39,116.39 0 0 1 831.38,158.48L842.60,174.09A97.17,97.17 0 0 0 824.11,191.46Z" fill="#FF5500" stroke="#333" stroke-width="0.75" stroke-opacity="0.45"/>
<path d="M824.11,191.46A97.17,97.17 0 0 1 842.60,174.09L853.82,189.70A77.94,77.94 0 0 0 838.98,203.63Z" fill="#FFCC00" stroke="#333" stroke-width="0.75" stroke-opacity="0.45"/>
<path d="M838.98,203.63A77.94,77.94 0 0 1 853.82,189.70L865.03,205.31A58.72,58.72 0 0 0 853.86,215.81Z" fill="#98F00C" stroke="#333" stroke-width="0.75" stroke-opacity="0.45"/>
<path d="M853.86,215.81A58.72,58.72 0 0 1 865.03,205.31L876.25,220.92A39.50,39.50 0 0 0 868.73,227.98Z" fill="#16ECEC" stroke="#333" stroke-width="0.75" stroke-opacity="0.45"/>
<path d="M775.30,80.43A212.50,212.50 0 0 1 824.19,54.22L830.98,72.20A193.28,193.28 0 0 0 786.51,96.04Z" fill="#FFFFFF" stroke="#333" stroke-width="0.75" stroke-opacity="0.45"/>
<path d="M786.51,96.04A193.28,193.28 0 0 1 830.98,72.20L837.78,90.18A174.06,174.06 0 0 0 797.73,111.65Z" fill="#FFFFFF" stroke="#333" stroke-width="0.75" stroke-opacity="0.45"/>
<path d="M797.73,111.65A174.06,174.06 0 0 1 837.78,90.18L844.57,108.16A154.83,154.83 0 0 0 808.95,127.26Z" fill="#20EA20" stroke="#333" stroke-width="0.75" stroke-opacity="0.45"/>
<path d="M808.95,127.26A154.83,154.83 0 0 1 844.57,108.16L851.36,126.14A135.61,135.61 0 0 0 820.17,142.87Z" fill="#FFF000" stroke="#333" stroke-width="0.75" stroke-opacity="0.45"/>
<path d="M820.17,142.87A135.61,135.61 0 0 1 851.36,126.14L858.16,144.12A116.39,116.39 0 0 0 831.38,158.48Z" fill="#FFF000" stroke="#333" stroke-width="0.75" stroke-opacity="0.45"/>
<path d="M831.38,158.48A116.39,116.39 0 0 1 858.16,144.12L864.95,162.11A97.17,97.17 0 0 0 842.60,174.09Z" fill="#FF7800" stroke="#333" stroke-width="0.75" stroke-opacity="0.45"/>
<path d="M842.60,174.09A97.17,97.17 0 0 1 864.95,162.11L871.75,180.09A77.94,77.94 0 0 0 853.82,189.70Z" fill="#FFCC00" stroke="#333" stroke-width="0.75" stroke-opacity="0.45"/>
<path d="M853.82,189.70A77.94,77.94 0 0 1 871.75,180.09L878.54,198.07A58.72,58.72 0 0 0 865.03,205.31Z" fill="#98F00C" stroke="#333" stroke-width="0.75" stroke-opacity="0.45"/>
<path d="M865.03,205.31A58.72,58.72 0 0 1 878.54,198.07L885.34,216.05A39.50,39.50 0 0 0 876.25,220.92Z" fill="#16EAC0" stroke="#333" stroke-width="0.75" stroke-opacity="0.45"/>
<path d="M824.19,54.22A212.50,212.50 0 0 1 878.19,41.55L880.10,60.68A193.28,193.28 0 0 0 830.98,72.20Z" fill="#FFFFFF" stroke="#333" stroke-width="0.75" stroke-opacity="0.45"/>
<path d="M830.98,72.20A193.28,193.28 0 0 1 880.10,60.68L882.01,79.81A174.06,174.06 0 0 0 837.78,90.18Z" fill="#FFFFFF" stroke="#333" stroke-width="0.75" stroke-opacity="0.45"/>
<path d="M837.78,90.18A174.06,174.06 0 0 1 882.01,79.81L883.92,98.93A154.83,154.83 0 0 0 844.57,108.16Z" fill="#16ECEC" stroke="#333" stroke-width="0.75" stroke-opacity="0.45"/>
<path d="M844.57,108.16A154.83,154.83 0 0 1 883.92,98.93L885.83,118.06A135.61,135.61 0 0 0 851.36,126.14Z" fill="#98F00C" stroke="#333" stroke-width="0.75" stroke-opacity="0.45"/>
<path d="M851.36,126.14A135.61,135.61 0 0 1 885.83,118.06L887.74,137.19A116.39,116.39 0 0 0 858.16,144.12Z" fill="#20EA20" stroke="#333" stroke-width="0.75" stroke-opacity="0.45"/>
<path d="M858.16,144.12A116.39,116.39 0 0 1 887.74,137.19L889.65,156.31A97.17,97.17 0 0 0 864.95,162.11Z" fill="#FFA000" stroke="#333" stroke-width="0.75" stroke-opacity="0.45"/>
<path d="M864.95,162.11A97.17,97.17 0 0 1 889.65,156.31L891.56,175.44A77.94,77.94 0 0 0 871.75,180.09Z" fill="#FFCC00" stroke="#333" stroke-width="0.75" stroke-opacity="0.45"/>
<path d="M871.75,180.09A77.94,77.94 0 0 1 891.56,175.44L893.47,194.57A58.72,58.72 0 0 0 878.54,198.07Z" fill="#FFF000" stroke="#333" stroke-width="0.75" stroke-opacity="0.45"/>
<path d="M878.54,198.07A58.72,58.72 0 0 1 893.47,194.57L895.38,213.70A39.50,39.50 0 0 0 885.34,216.05Z" fill="#16F088" stroke="#333" stroke-width="0.75" stroke-opacity="0.45"/>
<g font-family="Liberation Sans, sans-serif" fill="#333">
<text x="906.2" y="33.6" font-size="13" text-anchor="middle" dominant-baseline="central" transform="rotate(1.8 906.2 33.6)">0</text>
<text x="962.7" y="42.9" font-size="13" text-anchor="middle" dominant-baseline="central" transform="rotate(16.8 962.7 42.9)">1</text>
<text x="1015.0" y="66.4" font-size="13" text-anchor="middle" dominant-baseline="central" transform="rotate(31.8 1015.0 66.4)">2</text>
<text x="1059.3" y="102.7" font-size="13" text-anchor="middle" dominant-baseline="central" transform="rotate(46.8 1059.3 102.7)">3</text>
<text x="1092.7" y="149.3" font-size="13" text-anchor="middle" dominant-baseline="central" transform="rotate(61.8 1092.7 149.3)">4</text>
<text x="1113.0" y="202.9" font-size="13" text-anchor="middle" dominant-baseline="central" transform="rotate(76.8 1113.0 202.9)">5</text>
<text x="1118.7" y="259.9" font-size="13" text-anchor="middle" dominant-baseline="central" transform="rotate(91.8 1118.7 259.9)">6</text>
<text x="1109.4" y="316.4" font-size="13" text-anchor="middle" dominant-baseline="central" transform="rotate(106.8 1109.4 316.4)">7</text>
<text x="1085.9" y="368.7" font-size="13" text-anchor="middle" dominant-baseline="central" transform="rotate(121.8 1085.9 368.7)">8</text>
<text x="1049.6" y="413.0" font-size="13" text-anchor="middle" dominant-baseline="central" transform="rotate(136.8 1049.6 413.0)">9</text>
<text x="1003.0" y="446.4" font-size="13" text-anchor="middle" dominant-baseline="central" transform="rotate(151.8 1003.0 446.4)">10</text>
<text x="949.4" y="466.7" font-size="13" text-anchor="middle" dominant-baseline="central" transform="rotate(166.8 949.4 466.7)">11</text>
<text x="892.4" y="472.4" font-size="13" text-anchor="middle" dominant-baseline="central" transform="rotate(181.8 892.4 472.4)">12</text>
<text x="835.9" y="463.1" font-size="13" text-anchor="middle" dominant-baseline="central" transform="rotate(196.8 835.9 463.1)">13</text>
<text x="783.6" y="439.6" font-size="13" text-anchor="middle" dominant-baseline="central" transform="rotate(211.8 783.6 439.6)">14</text>
<text x="739.3" y="403.3" font-size="13" text-anchor="middle" dominant-baseline="central" transform="rotate(226.8 739.3 403.3)">15</text>
<text x="705.9" y="356.7" font-size="13" text-anchor="middle" dominant-baseline="central" transform="rotate(241.8 705.9 356.7)">16</text>
<text x="685.6" y="303.1" font-size="13" text-anchor="middle" dominant-baseline="central" transform="rotate(256.8 685.6 303.1)">17</text>
<text x="679.9" y="246.1" font-size="13" text-anchor="middle" dominant-baseline="central" transform="rotate(271.8 679.9 246.1)">18</text>
<text x="689.2" y="189.6" font-size="13" text-anchor="middle" dominant-baseline="central" transform="rotate(286.8 689.2 189.6)">19</text>
<text x="712.7" y="137.3" font-size="13" text-anchor="middle" dominant-baseline="central" transform="rotate(301.8 712.7 137.3)">20</text>
<text x="749.0" y="93.0" font-size="13" text-anchor="middle" dominant-baseline="central" transform="rotate(316.8 749.0 93.0)">21</text>
<text x="795.6" y="59.6" font-size="13" text-anchor="middle" dominant-baseline="central" transform="rotate(331.8 795.6 59.6)">22</text>
<text x="849.2" y="39.3" font-size="13" text-anchor="middle" dominant-baseline="central" transform="rotate(346.8 849.2 39.3)">23</text>
<text x="904.0" y="51.7" font-size="11.5" text-anchor="middle" dominant-baseline="central" transform="rotate(1.2 904.0 51.7)">10</text>
<text x="904.0" y="70.9" font-size="11.5" text-anchor="middle" dominant-baseline="central" transform="rotate(1.2 904.0 70.9)">12</text>
<text x="904.0" y="90.1" font-size="11.5" text-anchor="middle" dominant-baseline="central" transform="rotate(1.2 904.0 90.1)">15</text>
<text x="904.0" y="109.3" font-size="11.5" text-anchor="middle" dominant-baseline="central" transform="rotate(1.2 904.0 109.3)">17</text>
<text x="904.0" y="128.5" font-size="11.5" text-anchor="middle" dominant-baseline="central" transform="rotate(1.2 904.0 128.5)">20</text>
<text x="904.0" y="147.7" font-size="11.5" text-anchor="middle" dominant-baseline="central" transform="rotate(1.2 904.0 147.7)">30</text>
<text x="904.0" y="167.0" font-size="11.5" text-anchor="middle" dominant-baseline="central" transform="rotate(1.2 904.0 167.0)">40</text>
<text x="904.0" y="186.2" font-size="11.5" text-anchor="middle" dominant-baseline="central" transform="rotate(1.2 904.0 186.2)">60</text>
<text x="904.0" y="205.4" font-size="11.5" text-anchor="middle" dominant-baseline="central" transform="rotate(1.2 904.0 205.4)">80</text>
<text x="899" y="234.5" font-size="14" text-anchor="middle" dominant-baseline="central">15UT</text>
<text x="899" y="255" font-size="14" text-anchor="middle" dominant-baseline="central">10M</text>
<text x="899" y="275" font-size="14" text-anchor="middle" dominant-baseline="central">3%</text>
</g>
<rect x="686.70" y="481" width="39.18" height="21" fill="#FFFFFF"/>
<rect x="725.58" y="481" width="39.18" height="21" fill="#1FE6E8"/>
<rect x="764.46" y="481" width="39.18" height="21" fill="#16E87C"/>
<rect x="803.34" y="481" width="39.18" height="21" fill="#22E622"/>
<rect x="842.22" y="481" width="39.18" height="21" fill="#9BEE16"/>
<rect x="881.10" y="481" width="39.18" height="21" fill="#DCF50A"/>
<rect x="919.98" y="481" width="39.18" height="21" fill="#FFF200"/>
<rect x="958.86" y="481" width="39.18" height="21" fill="#FFD200"/>
<rect x="997.74" y="481" width="39.18" height="21" fill="#FFA50A"/>
<rect x="1036.62" y="481" width="39.18" height="21" fill="#FF6600"/>
<rect x="1075.50" y="481" width="39.18" height="21" fill="#FF1010"/>
<line x1="686.7" y1="481" x2="725.58" y2="481" stroke="#ddd" stroke-width="1"/>
<line x1="686.7" y1="502" x2="725.58" y2="502" stroke="#ddd" stroke-width="1"/>
<g font-family="Liberation Sans, sans-serif" fill="#333" font-size="13" text-anchor="middle">
<text x="706.1" y="496.5">0%</text>
<text x="745.0" y="496.5">10%</text>
<text x="783.9" y="496.5">20%</text>
<text x="822.8" y="496.5">30%</text>
<text x="861.7" y="496.5">40%</text>
<text x="900.5" y="496.5">50%</text>
<text x="939.4" y="496.5">60%</text>
<text x="978.3" y="496.5">70%</text>
<text x="1017.2" y="496.5">80%</text>
<text x="1056.1" y="496.5">90%</text>
<text x="1094.9" y="496.5">100%</text>
</g>
</svg>
<div class="t" style="left:8.6px;top:527.4px;">To RX:</div>
<div class="in" style="left:52.3px;top:524.5px;width:52.5px;height:19.5px;"></div>
<div class="t" style="left:55.8px;top:527.4px;">3963</div>
<div class="t" style="left:109.2px;top:527.4px;">km,</div>
<div class="in" style="left:133.2px;top:524.5px;width:53.0px;height:19.5px;"></div>
<div class="t" style="left:136.7px;top:527.4px;">2463</div>
<div class="t" style="left:190.9px;top:527.4px;">mi,</div>
<div class="in" style="left:211.5px;top:524.5px;width:46.5px;height:19.5px;"></div>
<div class="t" style="left:215.0px;top:527.4px;">5</div>
<div class="t" style="left:263.5px;top:527.4px;">°</div>
<div class="t" style="left:276.3px;top:527.4px;">Grayline:</div>
<div class="in" style="left:333.2px;top:525.3px;width:109.6px;height:18.5px;border-color:#C4C4C4;border-top:2px solid #8A8A8A;"></div>
<div class="t" style="left:335.0px;top:527.4px;">2017-07-24</div>
<svg style="position:absolute;left:426px;top:528px" width="15" height="14"><rect x="0.5" y="0.5" width="14" height="13" fill="#F4F4F8" stroke="#8E9AB0"/><rect x="1" y="1" width="13" height="2.5" fill="#4F6FB8"/><path d="M1,6.5H14M1,9.5H14M5,3.5V13.5M9.5,3.5V13.5" stroke="#C8CCD8" stroke-width="0.8"/><rect x="9.8" y="6.8" width="3" height="2.4" fill="#D08060"/></svg>
<div class="sel" style="left:452.0px;top:525.5px;width:37.3px;height:18.0px;"></div>
<div class="t" style="left:456.5px;top:527.2px;">21</div>
<div class="arr" style="left:476.8px;top:532.0px;"></div>
<div class="t" style="left:495.0px;top:527.4px;">:</div>
<div class="sel" style="left:502.2px;top:525.5px;width:37.5px;height:18.0px;"></div>
<div class="t" style="left:506.7px;top:527.2px;">20</div>
<div class="arr" style="left:527.2px;top:532.0px;"></div>
<div class="btn" style="left:544.5px;top:525.5px;width:36.0px;height:19.5px;padding-top:1.8px;">Set</div>
<div class="btn" style="left:584.5px;top:525.5px;width:51.2px;height:19.5px;padding-top:1.8px;">Reset</div>
<div class="fs" style="left:16.2px;top:561.4px;width:276.5px;height:71.2px;"></div>
<div class="lg" style="left:28.9px;top:556.4px;width:125.4px;"></div>
<div class="t" style="left:30.9px;top:555.1px;">Propagation Params</div>
<div class="t" style="left:31.5px;top:578.6px;">Es:</div>
<div class="sel" style="left:67.4px;top:577.4px;width:44.2px;height:17.6px;"></div>
<div class="t" style="left:71.9px;top:578.9px;">No</div>
<div class="arr" style="left:99.1px;top:583.7px;"></div>
<div class="t" style="left:121.6px;top:578.6px;">Model:</div>
<div class="sel" style="left:181.9px;top:577.7px;width:73.6px;height:17.2px;"></div>
<div class="t" style="left:186.4px;top:579.0px;">Auto</div>
<div class="arr" style="left:243.0px;top:583.8px;"></div>
<div class="t" style="left:31.5px;top:601.4px;">SSN:</div>
<div class="in" style="left:66.8px;top:599.0px;width:45.0px;height:19.0px;"></div>
<div class="t" style="left:121.6px;top:601.6px;">Min.TOA:</div>
<div class="sel" style="left:181.9px;top:600.5px;width:41.7px;height:17.2px;"></div>
<div class="t" style="left:186.4px;top:601.8px;">0.1</div>
<div class="arr" style="left:211.1px;top:606.6px;"></div>
<div class="t" style="left:227.5px;top:601.6px;">°</div>
<div class="fs" style="left:16.3px;top:638.7px;width:276.6px;height:119.1px;"></div>
<div class="lg" style="left:29.8px;top:633.7px;width:224.0px;"></div>
<div class="t" style="left:31.8px;top:632.3px;">Today's Sunrise/Sunset Times (UTC)</div>
<div class="t" style="left:66.5px;top:654.7px;font-weight:bold;">Transmitter</div>
<div class="t" style="left:173.9px;top:654.7px;font-weight:bold;">Receiver</div>
<div class="t" style="left:31.8px;top:675.5px;">GND</div>
<div class="btn" style="left:65.2px;top:673.6px;width:49.4px;height:20.5px;padding-top:2.2px;">05:57</div>
<div class="btn" style="left:119.5px;top:673.6px;width:49.4px;height:20.5px;padding-top:2.2px;">18:53</div>
<div class="btn" style="left:173.4px;top:673.6px;width:49.4px;height:20.5px;padding-top:2.2px;">04:10</div>
<div class="btn" style="left:227.6px;top:673.6px;width:49.4px;height:20.5px;padding-top:2.2px;">20:00</div>
<div class="t" style="left:31.8px;top:700.6px;">D</div>
<div class="btn" style="left:65.2px;top:698.6px;width:49.4px;height:20.5px;padding-top:2.2px;">05:31</div>
<div class="btn" style="left:119.5px;top:698.6px;width:49.4px;height:20.5px;padding-top:2.2px;">19:19</div>
<div class="btn" style="left:173.4px;top:698.6px;width:49.4px;height:20.5px;padding-top:2.2px;">03:22</div>
<div class="btn" style="left:227.6px;top:698.6px;width:49.4px;height:20.5px;padding-top:2.2px;">20:49</div>
<div class="t" style="left:31.8px;top:725.3px;">F</div>
<div class="btn" style="left:65.2px;top:723.3px;width:49.4px;height:20.5px;padding-top:2.2px;">04:57</div>
<div class="btn" style="left:119.5px;top:723.3px;width:49.4px;height:20.5px;padding-top:2.2px;">19:54</div>
<div class="btn" style="left:173.4px;top:723.3px;width:49.4px;height:20.5px;padding-top:2.2px;">02:00</div>
<div class="btn" style="left:227.6px;top:723.3px;width:49.4px;height:20.5px;padding-top:2.2px;">22:10</div>
<div class="fs" style="left:305.9px;top:563.1px;width:373.0px;height:239.4px;"></div>
<div class="lg" style="left:319.5px;top:558.1px;width:120.0px;"></div>
<div class="t" style="left:321.5px;top:559.4px;">Transmitter Site</div>
<svg style="position:absolute;left:421px;top:555.5px" width="11" height="16"><path d="M5.5,15.5 C5,11 1,8.5 1,5 A4.5,4.5 0 1 1 10,5 C10,8.5 6,11 5.5,15.5Z" fill="#E8625A" stroke="#A03030" stroke-width="0.8"/><circle cx="5.5" cy="5" r="1.4" fill="#222"/></svg>
<div class="t" style="left:321.5px;top:583.4px;">QTH:</div>
<div class="t" style="left:321.5px;top:606.5px;">Name:</div>
<div class="t" style="left:321.5px;top:630.5px;">Latitude:</div>
<div class="t" style="left:321.5px;top:655.3px;">Longitude:</div>
<div class="t" style="left:321.5px;top:679.7px;">TX antenna:</div>
<div class="t" style="left:321.5px;top:701.5px;">TX power:</div>
<div class="t" style="left:321.5px;top:723.3px;">TX mode:</div>
<div class="t" style="left:321.5px;top:745.9px;">Specials:</div>
<div class="t" style="left:321.5px;top:771.1px;">Current point:</div>
<div class="sel" style="left:406.7px;top:582.6px;width:210.3px;height:16.9px;"></div>
<div class="t" style="left:411.2px;top:583.8px;">&lt;&lt; Select a location &gt;&gt;</div>
<div class="arr" style="left:604.5px;top:588.6px;"></div>
<div class="in" style="left:406.7px;top:603.7px;width:160.2px;height:19.1px;"></div>
<div class="t" style="left:410.2px;top:606.5px;">IK76RI</div>
<div class="btn" style="left:572.4px;top:603.9px;width:64.8px;height:19.8px;padding-top:1.9px;">Loc calc</div>
<div class="in" style="left:406.7px;top:628.5px;width:160.2px;height:19.1px;"></div>
<div class="t" style="left:410.2px;top:630.5px;">16.3540</div>
<div class="t" style="left:572.7px;top:630.5px;">[-90..90]</div>
<div class="in" style="left:406.7px;top:653.4px;width:160.2px;height:19.1px;"></div>
<div class="t" style="left:410.2px;top:655.3px;">-4.5410</div>
<div class="t" style="left:572.7px;top:655.3px;">[-180..180]</div>
<div class="sel" style="left:406.7px;top:678.3px;width:190.0px;height:17.5px;"></div>
<div class="t" style="left:411.2px;top:679.7px;">Dipole @ 10M (33ft)</div>
<div class="arr" style="left:584.2px;top:684.5px;"></div>
<div class="sel" style="left:406.8px;top:700.5px;width:68.8px;height:17.3px;"></div>
<div class="t" style="left:411.3px;top:701.8px;">500 W</div>
<div class="arr" style="left:463.1px;top:706.6px;"></div>
<div class="sel" style="left:406.8px;top:722.5px;width:49.7px;height:17.2px;"></div>
<div class="t" style="left:411.3px;top:723.8px;">SSB</div>
<div class="arr" style="left:444.0px;top:728.6px;"></div>
<div class="btn" style="left:406.8px;top:744.6px;width:92.6px;height:19.0px;padding-top:1.5px;">Swap TX-RX</div>
<div class="sel" style="left:572.7px;top:745.4px;width:86.0px;height:17.4px;"></div>
<div class="t" style="left:577.2px;top:746.8px;">Short-path</div>
<div class="arr" style="left:646.2px;top:751.6px;"></div>
<div class="btn" style="left:406.8px;top:769.4px;width:75.5px;height:18.9px;padding-top:1.4px;">Set Home</div>
<div class="btn" style="left:572.7px;top:769.4px;width:90.1px;height:19.0px;padding-top:1.5px;">Unset Home</div>
<div class="fs" style="left:691.9px;top:563.1px;width:448.0px;height:168.0px;"></div>
<div class="lg" style="left:705.3px;top:558.1px;width:105.0px;"></div>
<div class="t" style="left:707.3px;top:559.4px;">Receiver Site</div>
<svg style="position:absolute;left:793px;top:555px" width="11" height="16"><path d="M5.5,15.5 C5,11 1,8.5 1,5 A4.5,4.5 0 1 1 10,5 C10,8.5 6,11 5.5,15.5Z" fill="#5A82E0" stroke="#2A4A9A" stroke-width="0.8"/><circle cx="5.5" cy="5" r="1.4" fill="#222"/></svg>
<div class="t" style="left:707.6px;top:583.4px;">QTH:</div>
<div class="t" style="left:707.6px;top:606.5px;">Name:</div>
<div class="t" style="left:707.6px;top:630.5px;">Latitude:</div>
<div class="t" style="left:707.6px;top:655.3px;">Longitude:</div>
<div class="t" style="left:707.6px;top:679.6px;">RX antenna:</div>
<div class="t" style="left:707.6px;top:701.6px;">Noise level:</div>
<div class="sel" style="left:786.2px;top:582.4px;width:210.6px;height:17.2px;"></div>
<div class="t" style="left:790.7px;top:583.7px;">&lt;&lt; Select a location &gt;&gt;</div>
<div class="arr" style="left:984.3px;top:588.5px;"></div>
<div class="in" style="left:786.0px;top:603.7px;width:161.2px;height:19.1px;"></div>
<div class="t" style="left:789.5px;top:606.5px;">JO01gr</div>
<div class="btn" style="left:952.6px;top:604.0px;width:64.8px;height:19.4px;padding-top:1.7px;">Loc calc</div>
<div class="in" style="left:786.0px;top:628.5px;width:161.2px;height:19.1px;"></div>
<div class="t" style="left:789.5px;top:630.5px;">51.7270</div>
<div class="t" style="left:952.6px;top:630.5px;">[-90..90]</div>
<div class="in" style="left:786.0px;top:653.4px;width:161.2px;height:19.1px;"></div>
<div class="t" style="left:789.5px;top:655.3px;">0.5058</div>
<div class="t" style="left:952.6px;top:655.3px;">[-180..180]</div>
<div class="sel" style="left:786.4px;top:678.5px;width:190.0px;height:17.3px;"></div>
<div class="t" style="left:790.9px;top:679.8px;">Dipole @ 15M (50ft)</div>
<div class="arr" style="left:963.9px;top:684.6px;"></div>
<div class="sel" style="left:786.4px;top:700.5px;width:124.2px;height:17.2px;"></div>
<div class="t" style="left:790.9px;top:701.8px;">Quiet (153)</div>
<div class="arr" style="left:898.1px;top:706.6px;"></div>
<div class="btn" style="left:692.9px;top:734.6px;width:112.0px;height:20.0px;padding-top:2.0px;">All-year grayline</div>
<div class="btn" style="left:809.5px;top:734.6px;width:123.3px;height:20.0px;padding-top:2.0px;">All-year prediction</div>
<div class="btn" style="left:937.3px;top:734.6px;width:126.2px;height:20.0px;padding-top:2.0px;">1-month prediction</div>
<div class="btn" style="left:1068.4px;top:734.6px;width:69.9px;height:20.0px;padding-top:2.0px;">Tri-graph</div>
</body></html>
